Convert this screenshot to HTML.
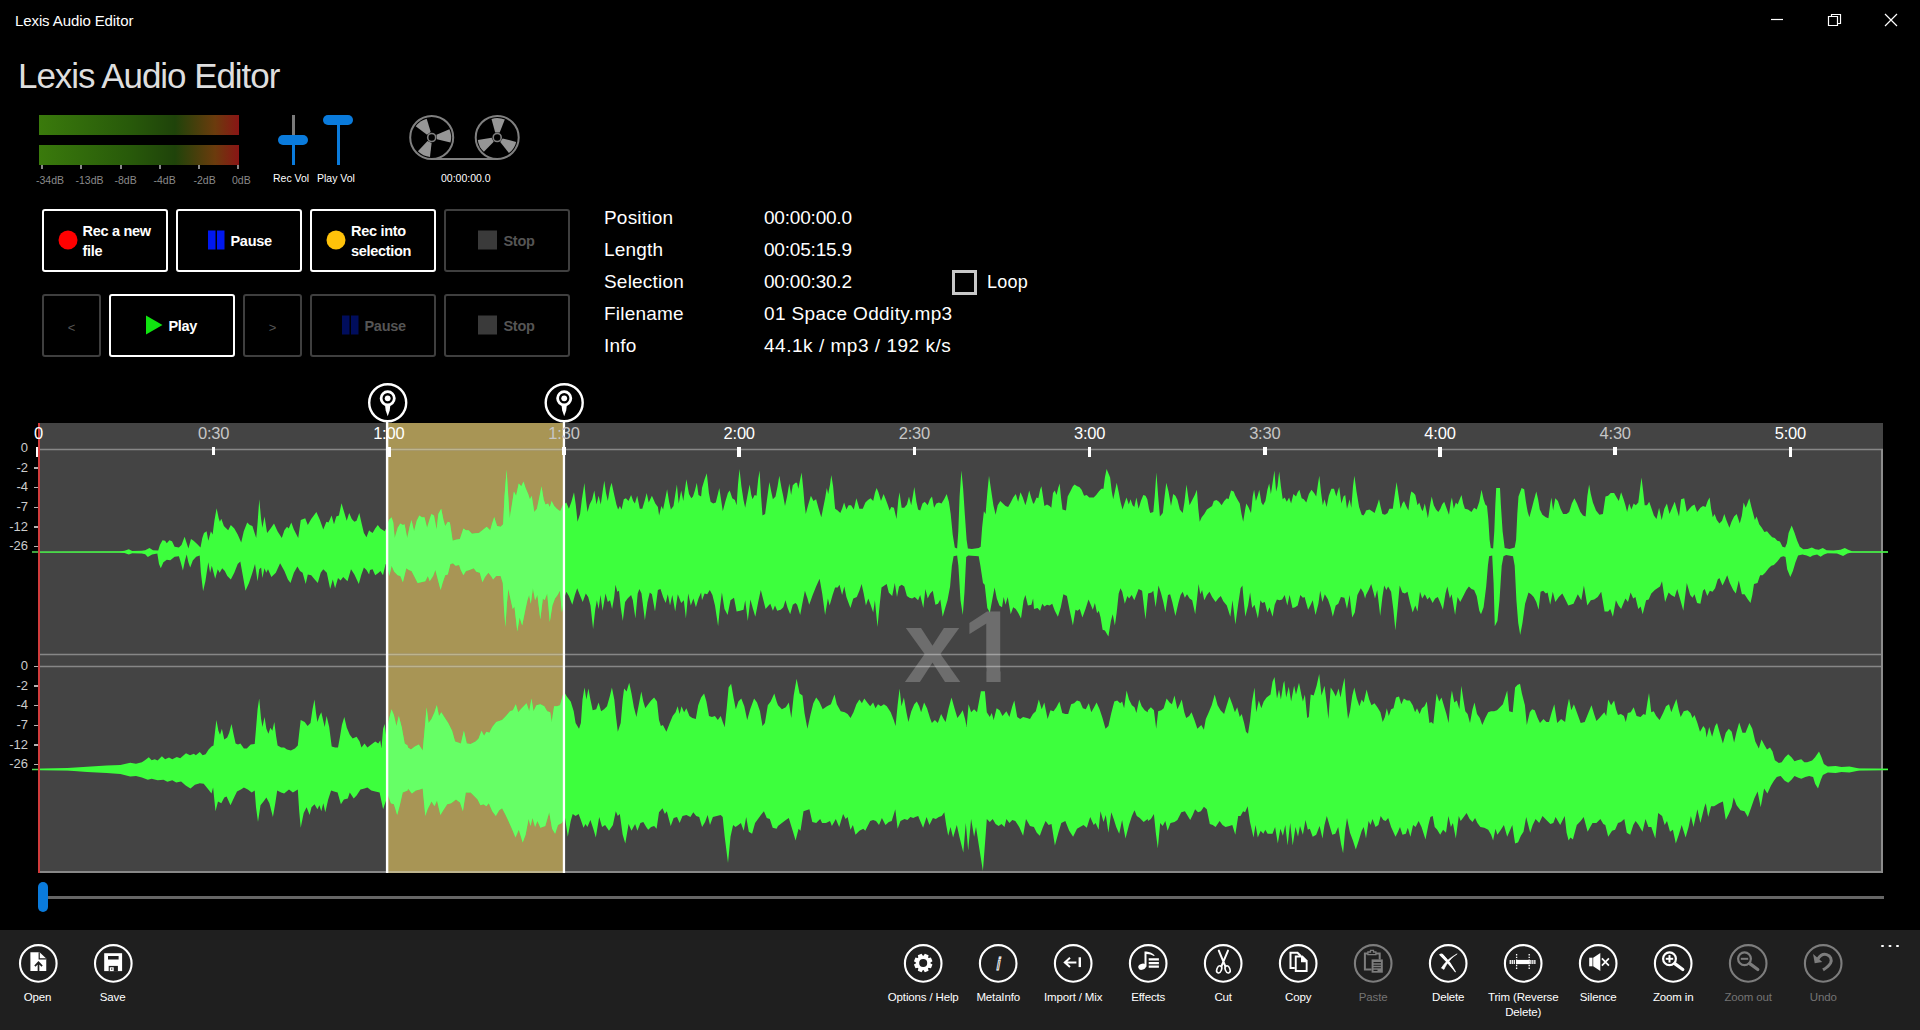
<!DOCTYPE html>
<html><head><meta charset="utf-8"><title>Lexis Audio Editor</title>
<style>
*{box-sizing:border-box;margin:0;padding:0}
html,body{width:1920px;height:1030px;overflow:hidden;background:#000;color:#fff;font-family:"Liberation Sans",sans-serif}
.abs{position:absolute}
#tbar{position:absolute;left:15px;top:11.6px;font-size:15px;line-height:18px;color:#fff;letter-spacing:-0.1px}
#title{position:absolute;left:18px;top:55px;font-size:35px;line-height:42px;color:#dedede;letter-spacing:-1.05px;font-weight:400}
.meter{position:absolute;left:39px;width:200px;height:20px;background:linear-gradient(90deg,#3a7a0c 0%,#285a0a 45%,#1f430a 68%,#6b3b0d 88%,#8a1515 100%)}
.mt{position:absolute;top:165px;width:2px;height:4px;background:#888}
.ml{position:absolute;top:174px;font-size:10.5px;line-height:12px;color:#8a8a8a;white-space:nowrap}
.vl{position:absolute;top:172px;font-size:10.5px;line-height:12px;color:#fff;white-space:nowrap}
.btn{position:absolute;height:63px;padding-top:1px;border:2px solid #fff;border-radius:3px;background:#000;color:#fff;font-size:14.5px;font-weight:700;line-height:20px;display:flex;align-items:center;letter-spacing:-0.3px}
.btn.dis{border-color:#3f3f3f;color:#555}
.il{position:absolute;left:604px;font-size:19px;line-height:24px;color:#fff;white-space:nowrap;letter-spacing:0.2px;margin-top:0.7px}
.iv{position:absolute;left:764px;font-size:19px;line-height:24px;color:#fff;white-space:nowrap;letter-spacing:-0.2px;margin-top:0.7px}
.tl{position:absolute;top:423.3px;font-size:16.5px;line-height:20px;color:#e6e6e6;white-space:nowrap;transform:translateX(-50%);letter-spacing:-0.2px}
.tk{position:absolute;top:448px;width:3px;height:8px;background:#fff}
.ax{position:absolute;left:0;width:28px;text-align:right;font-size:13px;line-height:14px;color:#ccc;margin-top:0.6px}
.axt{position:absolute;left:34px;width:3.5px;height:1.5px;background:#b4b4b4}
#bar{position:absolute;left:0;top:930px;width:1920px;height:100px;background:#1f1f1f}
.tb{position:absolute;top:0;width:100px;height:100px;text-align:center;color:#fff;font-size:11.5px;line-height:15px}
.tb svg{position:absolute;left:31px;top:13px;width:40px;height:40px;overflow:visible}
.tb span{position:absolute;left:1.2px;right:-1.2px;top:60px;display:block;letter-spacing:-0.15px}
.tb.dis{color:#747474}
</style></head><body>
<div id="tbar">Lexis Audio Editor</div>
<svg class="abs" style="left:1760px;top:0" width="160" height="40" viewBox="1760 0 160 40" fill="none" stroke="#fff" stroke-width="1.2">
<path d="M1771 19.5h12"/><path d="M1828.5 16.5h9v9h-9z"/><path d="M1831.500 16.500V14.500H1840.500V23.500H1838"/><path d="M1885 14l12 12M1897 14l-12 12"/></svg>
<div id="title">Lexis Audio Editor</div>
<div class="meter" style="top:115px"></div><div class="meter" style="top:145px"></div>
<div class="mt" style="left:41px"></div><div class="mt" style="left:80px"></div><div class="mt" style="left:120px"></div><div class="mt" style="left:159px"></div><div class="mt" style="left:198px"></div><div class="mt" style="left:237px"></div><div class="ml" style="left:36px">-34dB</div><div class="ml" style="left:75.5px">-13dB</div><div class="ml" style="left:114.5px">-8dB</div><div class="ml" style="left:153.5px">-4dB</div><div class="ml" style="left:193.5px">-2dB</div><div class="ml" style="left:232px">0dB</div>
<div class="vl" style="left:273px">Rec Vol</div><div class="vl" style="left:317px">Play Vol</div>
<div class="vl" style="left:441px">00:00:00.0</div>
<svg class="abs" style="left:270px;top:105px" width="270" height="70" viewBox="270 105 270 70">
<rect x="292" y="115" width="3" height="22" fill="#7a7a7a"/><rect x="292" y="137" width="3" height="28" fill="#0a7bdc"/>
<rect x="278" y="135" width="30" height="10" rx="5" fill="#0a7bdc"/>
<rect x="337" y="118" width="3" height="47" fill="#0a7bdc"/><rect x="323" y="115" width="30" height="10" rx="5" fill="#0a7bdc"/>
<circle cx="431.7" cy="137.5" r="21.5" fill="none" stroke="#808080" stroke-width="2"/><path d="M436.5 134.8L449.4 129.3A19.5 19.5 0 0 1 450.5 142.5L436.9 139.3Z" fill="#969696"/><path d="M431.6 143.0L430.0 156.9A19.5 19.5 0 0 1 417.9 151.3L427.5 141.1Z" fill="#969696"/><path d="M427.0 134.7L415.7 126.3A19.5 19.5 0 0 1 426.7 118.7L430.7 132.1Z" fill="#969696"/><circle cx="431.7" cy="137.5" r="4" fill="#000" stroke="#808080" stroke-width="1.6"/><circle cx="497.2" cy="137.5" r="21.5" fill="none" stroke="#808080" stroke-width="2"/><path d="M495.2 132.4L491.5 118.9A19.5 19.5 0 0 1 504.8 119.6L499.7 132.6Z" fill="#969696"/><path d="M502.6 138.4L516.2 141.9A19.5 19.5 0 0 1 508.9 153.1L500.2 142.1Z" fill="#969696"/><path d="M493.7 141.8L483.9 151.8A19.5 19.5 0 0 1 477.8 139.9L491.7 137.8Z" fill="#969696"/><circle cx="497.2" cy="137.5" r="4" fill="#000" stroke="#808080" stroke-width="1.6"/><path d="M431.7 159H497.2" stroke="#808080" stroke-width="2" fill="none"/>
</svg>
<div class="btn" style="left:42px;top:209px;width:126px"><svg style="position:absolute;left:13.5px;top:19px" width="20" height="20" viewBox="0 0 20 20"><circle cx="10" cy="10" r="9.5" fill="#f00"/></svg><span style="position:absolute;left:38.5px;white-space:nowrap">Rec a new<br>file</span></div><div class="btn" style="left:176px;top:209px;width:126px"><svg style="position:absolute;left:30px;top:19px" width="20" height="20" viewBox="0 0 20 20"><rect x="0" y="0.5" width="7.5" height="19" fill="#0018f0"/><rect x="9" y="0.5" width="7.500" height="19" fill="#0018f0"/></svg><span style="position:absolute;left:52.5px;white-space:nowrap">Pause</span></div><div class="btn" style="left:310px;top:209px;width:126px"><svg style="position:absolute;left:13.5px;top:19px" width="20" height="20" viewBox="0 0 20 20"><circle cx="10" cy="10" r="9.5" fill="#ffc20a"/></svg><span style="position:absolute;left:39px;white-space:nowrap">Rec into<br>selection</span></div><div class="btn dis" style="left:444px;top:209px;width:126px"><svg style="position:absolute;left:32px;top:19px" width="20" height="20" viewBox="0 0 20 20"><rect x="0" y="0.5" width="19" height="19" fill="#3a3a3a"/></svg><span style="position:absolute;left:57.5px;white-space:nowrap">Stop</span></div><div class="btn dis" style="left:42px;top:294px;width:59px"><span style="position:absolute;left:0;right:0;text-align:center;font-weight:400;font-size:13px;margin-top:3px">&lt;</span></div><div class="btn" style="left:109px;top:294px;width:126px"><svg style="position:absolute;left:34.5px;top:19px" width="20" height="20" viewBox="0 0 20 20"><path d="M0 0.500L16.500 10L0 19.500Z" fill="#10e510"/></svg><span style="position:absolute;left:57.5px;white-space:nowrap">Play</span></div><div class="btn dis" style="left:243px;top:294px;width:59px"><span style="position:absolute;left:0;right:0;text-align:center;font-weight:400;font-size:13px;margin-top:3px">&gt;</span></div><div class="btn dis" style="left:310px;top:294px;width:126px"><svg style="position:absolute;left:30px;top:19px" width="20" height="20" viewBox="0 0 20 20"><rect x="0" y="0.5" width="7.5" height="19" fill="#000d5c"/><rect x="9" y="0.5" width="7.500" height="19" fill="#000d5c"/></svg><span style="position:absolute;left:52.5px;white-space:nowrap">Pause</span></div><div class="btn dis" style="left:444px;top:294px;width:126px"><svg style="position:absolute;left:32px;top:19px" width="20" height="20" viewBox="0 0 20 20"><rect x="0" y="0.5" width="19" height="19" fill="#3a3a3a"/></svg><span style="position:absolute;left:57.5px;white-space:nowrap">Stop</span></div>
<div class="il" style="top:205px">Position</div><div class="iv" style="top:205px">00:00:00.0</div>
<div class="il" style="top:237px">Length</div><div class="iv" style="top:237px">00:05:15.9</div>
<div class="il" style="top:269px">Selection</div><div class="iv" style="top:269px">00:00:30.2</div>
<div class="il" style="top:301px">Filename</div><div class="iv" style="top:301px;letter-spacing:0.38px">01 Space Oddity.mp3</div>
<div class="il" style="top:333px">Info</div><div class="iv" style="top:333px;letter-spacing:0.52px">44.1k / mp3 / 192 k/s</div>
<div class="abs" style="left:952px;top:270px;width:25px;height:25px;border:3px solid #c8c8c8"></div>
<div class="il" style="left:987px;top:269px;font-size:18px">Loop</div>
<svg class="abs" style="left:0;top:380px" width="1920" height="500" viewBox="0 380 1920 500"><defs><clipPath id="sel"><rect x="388" y="423" width="175" height="450"/></clipPath><clipPath id="pan"><rect x="30" y="423" width="1860" height="450"/></clipPath></defs><rect x="38" y="423" width="1845" height="450" fill="#444"/><rect x="388" y="423" width="175" height="450" fill="#a89555"/><path d="M38 449.500H1883M38 654.500H1883M38 666.600H1883" stroke="#878787" stroke-width="1.5"/><path d="M38 872H1883" stroke="#878787" stroke-width="2"/><path d="M1882 449V873" stroke="#8c8c8c" stroke-width="2"/><path d="M388 449.500H563M388 654.500H563M388 666.600H563" stroke="#bdb48e" stroke-width="1.5"/><path d="M388 872H563" stroke="#bdb48e" stroke-width="2"/><path d="M32 552H1888M32 769.500H1888" stroke="#55d655" stroke-width="1.3"/><g clip-path="url(#pan)"><polygon points="38,551.9 119.3,551.6 124.5,550.7 128.8,549.3 132.2,551.1 141.8,550.7 145.2,550.2 149.5,548.1 153,550.2 158.2,550.5 159.9,545 162.5,540.2 165.1,540.7 166.8,543.3 169.4,540.2 172,541.2 174.6,546.7 178.9,547.6 181.5,545 184.6,536.7 186.7,543.3 188.4,548.5 191,538.9 193.6,540.7 197.1,544.1 200.5,547.6 202.3,538.1 204,532.9 206.6,531.2 208.3,540.7 210.9,531.2 212.6,534.6 214.4,520.8 216.6,508.3 218.7,518.2 219.9,521.7 221.3,518.7 223.9,526 225.6,527.7 228.2,530.3 230.8,525.1 234.3,528.6 237.7,534.6 241.2,542.4 243.8,531.2 247.2,522.5 249.8,525.1 252.4,526 256.2,538.1 257.6,522.5 259.3,499.2 261.1,519.1 262.4,527.7 264.5,516.5 267.1,532.9 270.6,528.6 274,523.4 277.5,531.2 281.8,538.1 284.4,530.3 287,526.8 288.7,528.6 291.3,522.5 293.9,529.4 298.2,538.1 300.8,519.9 305.2,518.2 307.8,525.1 311.2,519.1 316.4,512.1 319.9,519.9 323.3,529.4 326.4,521.7 328.5,522.5 331.6,515.6 334,524.2 336.3,516.5 338.9,515.6 341.5,503.2 344.1,512.1 346.7,520.8 349.2,513 351.8,519.1 354.4,521.7 356.5,520.8 359.3,513 361.4,522.5 363.9,532.9 366.5,537.2 369.1,530.3 370,531.2 372.6,532.9 375.2,528.6 377.8,525.1 380.4,528.6 384.7,531.2 386.4,527.7 389,519.9 391.6,517.3 393.3,522.5 394.7,538.1 397.7,527.7 400.3,523.4 402.9,525.1 404.6,524.2 407.2,538.1 409.8,526 411.5,519.9 414.1,531.2 416.7,520.8 419.3,515.6 421.9,517.3 424.5,517.3 427.1,527.7 429.7,519.1 431.4,513.9 434,515.6 436.6,529.4 438.3,513.9 441.2,508.7 443.5,519.9 445.2,526 447.8,521.7 449.9,522.5 452.7,540.7 455.6,539.8 459.9,538.9 463.4,528.6 466,530.3 468.6,530.3 472,533.8 475.5,533.2 478.9,532.9 482.4,530.3 486.7,526.8 490.2,530.3 491.9,524.2 494.2,517 497.1,526 500.6,526.8 503.1,524.2 504.5,496.6 506.6,469.8 508.3,496.6 509.7,518.2 511.8,505.2 513.9,491.4 516.1,495.7 518.7,483.6 521.3,486.2 523.5,481.4 525.6,487.9 528.2,494 529.9,499.2 531.7,495.7 534.3,512.1 536.9,508.7 539.5,496.6 541.5,486.2 543.8,500 545.5,504.4 548.1,503.5 549.8,507 551.6,500.9 554.2,506.1 556.8,508.7 560.2,511.3 562.8,505.2 566.3,502.6 568.9,508.7 571.4,501.8 574,492.3 575.8,505.2 577.5,521.7 580.1,513.9 581.8,500 584.4,483.1 586.1,500.9 587.5,512.1 589.6,504.4 592.2,499.2 594.3,490.5 596.5,504.4 598.6,495.7 600.8,504.4 602.6,491.4 604.3,480.7 606,493.1 607.8,500.9 610,487.9 611.6,482.8 613.8,493.1 616.4,504.4 618.1,509.6 619.9,506.1 621.6,509.6 623.8,499.2 625.9,498.3 628.5,500.9 631.1,494.9 633.2,500.9 634.9,503.5 637.2,495.7 639.8,508.7 642.3,508.7 644.9,500 646.7,493.1 648.7,502.6 651.9,495.7 655.3,503.5 657.9,507 659.1,515.6 661.4,506.1 663.1,509.6 664.8,500.9 667.1,489.3 669.1,501.8 670.9,509.6 673.5,506.1 675.2,494.9 676.9,484.5 678.7,503.5 681.2,490.5 683.3,500.9 686.4,479.3 689,494 691.3,498.3 693,496.6 695.1,489.7 696.8,482.8 698.5,494.9 701.1,496.6 702,487.9 704.6,479.3 706.8,473.2 708.9,493.1 710.6,501.8 713.2,503.5 715.8,502.6 717.9,494 719.3,487.9 721,499.2 722.8,511.3 725.3,501.8 727.9,493.1 729.7,490.5 732.3,498.3 734.9,500 736.6,505.2 738,484.5 739.5,468.9 741.4,486.2 743.5,500 745.2,507.8 747.3,496.6 749.6,484.5 751.3,494.9 752.5,499.2 754.7,494.9 756.5,495.7 758.2,479.3 759.6,470.6 761.1,496.6 762.5,515.6 765.1,513.9 767.4,496.6 769.4,481.9 771.2,491.4 772.9,499.2 775.5,496.6 777.6,486.2 779.3,475.8 781.5,487.9 783.3,496.6 785,506.1 787.1,496.6 789.3,483.6 791.1,494.9 792.8,485.3 795.4,482.8 797.1,482.8 798.3,488.8 800,480.2 801.6,472.4 803.2,487.9 804.5,503.5 805.8,513.9 808.3,504.4 810.9,495.7 813.5,500.9 816.1,499.2 818.7,508.7 821.3,517.3 823,508.7 825.1,498.3 826.8,487.9 828.2,494 830,484.5 831.3,475 833.1,486.2 835.1,508.7 837.7,510.4 840.3,513 842.1,508.7 844.1,502.6 846.4,509.6 848.6,505.2 851.1,505.2 853.8,509.6 856.4,498.3 859.4,508.7 862.8,508.7 865.4,502.6 868,500 870.6,498.3 873.2,500.9 874.9,493.1 876.6,487.9 878.4,492.3 881,500.9 883.6,494 885.3,498.3 887.9,505.2 889.6,510.4 891.3,507 893.9,507.8 896.5,519.1 898.3,500 899.5,492.3 901.7,507.8 904.3,507.8 906.9,504.4 909,496.6 911.2,505.2 913,494.9 914.3,487.1 916.4,501.8 918.1,509.6 920.2,510.4 922.5,503.5 924.7,501.8 927.7,505.2 929.9,499.2 932,496.6 934.1,507.8 936.3,503.5 938.9,502.6 941.5,503.5 944.1,499.2 946.7,494 948.9,501.8 950.7,513.9 952.7,534.6 954.8,547.6 957.1,548.5 958.3,531.2 959.6,496.6 961.4,470.6 963.1,487.9 964.8,513.9 966.6,539.8 967.9,548.5 971.8,549 978.7,548.1 980.7,546.7 982.1,527.7 983.9,511.3 985.6,513.9 987.3,493.1 989,475.8 990.8,487.9 993.4,505.2 995.6,514.7 997.7,505.2 1000.3,500.9 1002.9,503.5 1005.5,506.1 1008.1,507 1010.7,502.6 1013.2,497.4 1015.8,494 1018.1,501.8 1020.5,492.3 1022.8,497.4 1025.4,505.2 1027.1,499.2 1029.2,490.5 1031.4,498.3 1033.1,503.5 1034,503.5 1036.6,497.4 1038.3,498.3 1040.1,489.7 1041.4,486.2 1043,496.6 1044.4,506.1 1047,504.4 1049.6,506.1 1051.3,507.8 1053,493.1 1054.8,490.5 1056.5,494.9 1058.2,487.9 1059.6,483.6 1061.3,500 1062.5,509.6 1066,510.4 1067.7,496.6 1070.3,491.4 1072.9,486.2 1074.6,484.5 1077.2,486.2 1079.3,487.1 1081.6,489.7 1084.1,495.7 1086.7,494.9 1089.3,497.4 1093.7,497.4 1096.2,494.9 1098.8,491.4 1101.4,488.8 1103.5,488.8 1104.9,477.6 1106.6,468.9 1108.7,474.1 1110.1,477.6 1111.8,491.4 1113.2,499.2 1114.9,491.4 1116.7,482.8 1118.7,492.3 1120.5,501.8 1122.5,509.6 1124.8,502.6 1126.5,497.4 1128.8,504.4 1130.5,499.2 1132.6,505.2 1134.3,507 1136.4,497.4 1138.6,508.7 1140.9,500.9 1143.3,494.9 1145.5,495.7 1147.3,499.2 1149,508.7 1150.2,513 1153.3,512.1 1154.7,496.6 1156.4,472.4 1158.2,496.6 1159.9,516.5 1162.8,513 1164.6,496.6 1166.3,482.8 1168.5,491.4 1171,506.1 1173.2,494 1175.4,495.7 1177.5,500 1179.8,509.6 1182.7,513 1184.4,502.6 1186.5,484.5 1188.2,496.6 1189.6,505.2 1192.2,500 1194.8,494.9 1196.9,489.7 1198.3,508.7 1199.7,521.7 1201.7,517.3 1204.3,513.9 1206.9,509.6 1209.5,507.8 1212.1,506.1 1213.8,500.9 1216.4,500 1219,501.8 1221.6,505.2 1224.2,500.9 1226.8,498.3 1228.5,499.2 1231.1,490.5 1233.7,491.4 1235.4,495.7 1237.7,500 1239.8,503.5 1241.5,513.9 1243.2,521.7 1245,510.4 1246.3,503.5 1248.4,507 1251,513 1252.7,496.6 1254.1,489.7 1255.9,500.9 1257.9,494.9 1259.3,489.7 1261.4,502.6 1263.1,505.2 1265.4,500.9 1267.4,489.7 1269.2,483.6 1270.9,494 1272.6,482.8 1274.4,470.6 1276.1,491.4 1277.5,486.2 1279.2,471.5 1280.9,486.2 1282.7,499.2 1284.7,497.4 1286.8,501.8 1289.1,497.4 1291.1,503.5 1293.4,494 1296,496.6 1297.7,492.3 1299.4,489.7 1301.7,498.3 1303.8,499.2 1306.3,502.6 1308.9,494 1311.5,489.7 1314.1,493.1 1316.2,496.6 1317.9,484.5 1319.3,475.8 1321,492.3 1322.8,505.2 1324.5,499.2 1326.6,507 1328.8,495.7 1331.4,488.8 1334,488.8 1336.3,496.6 1338,490.5 1339.2,487.1 1341.4,503.5 1343.5,496.6 1345.2,494.9 1347,508.7 1349.6,499.2 1351.3,507.8 1353,486.2 1354.4,475.8 1356.5,491.4 1359.1,507 1361.7,514.7 1363.4,515.6 1365.1,513 1366,510.4 1369.5,509.6 1372.1,511.3 1374.6,513 1377.2,505.2 1379,499.2 1380.7,507 1382.4,513.9 1385,514.7 1387.6,513 1389.3,508.7 1392.8,508.7 1394.5,496.6 1396.6,481.9 1398.5,494.9 1400.6,508.7 1402.3,503.5 1404,500.9 1406.1,506.1 1408.4,510.4 1410.1,496.6 1411.3,491.4 1413.6,493.1 1415.3,494.9 1417.5,505.2 1419.3,502.6 1421.3,508.7 1422.7,511.3 1424.8,503.5 1426.5,511.3 1427.9,518.2 1430,505.2 1431.7,496.6 1433.8,505.2 1436,509.6 1438.3,512.1 1440.4,508.7 1442.1,504.4 1444.2,501.8 1446.4,507.8 1449,514.7 1450.7,502.6 1451.9,497.4 1453.8,508.7 1455.9,502.6 1457.6,504.4 1459.7,499.2 1461.5,494.9 1463.2,503.5 1464.9,508.7 1468,509.6 1471.5,512.1 1474.1,507.8 1476.7,509.6 1479.3,501.8 1481.5,489.7 1483.6,499.2 1485.3,504.4 1487,506.1 1488.3,519.1 1489.6,539.8 1490.8,548.1 1493.1,548.5 1494.3,531.2 1495.3,505.2 1496.2,487.9 1500,487.9 1500.9,505.2 1502.6,531.2 1504.7,548.1 1509.5,549 1514.7,547.6 1516.1,539.8 1517.3,513.9 1518.5,496.6 1521.6,487.9 1524.2,489.3 1525.9,501.8 1527.7,512.1 1529.4,517.3 1531.7,508.7 1533.7,500.9 1536.3,491.4 1538.1,499.2 1539.8,509.6 1542.4,514.7 1545.8,517.3 1548.4,518.2 1550.2,504.4 1551.4,497.4 1553.1,510.4 1555.3,498.3 1557.9,500.9 1560.5,508.7 1563.1,513.9 1566.6,513.9 1569.2,512.1 1571.8,503.5 1574.4,498.3 1577,503.5 1580.4,512.1 1583,515.6 1585.6,516.5 1587.3,496.6 1589.1,484.5 1590.8,494 1592.9,502.6 1596,510.4 1599.4,514.7 1602.9,513.9 1605.5,496.6 1608.1,495.7 1610.7,493.1 1614.1,493.1 1616.7,497.4 1618.8,500.9 1621.1,492.3 1623.6,499.2 1625.4,505.2 1627.1,512.1 1629.2,503.5 1631.4,509.6 1633.7,503.5 1635.8,505.2 1638.3,502.6 1640.1,487.9 1641.5,477.6 1643.2,491.4 1644.7,505.2 1647,505.2 1649.2,501.8 1651.3,507.8 1653.9,515.6 1656.5,519.1 1659.1,507.8 1661.7,519.9 1664.3,508.7 1666.9,503.5 1669.5,513.9 1672.1,507.8 1674.7,501.8 1676.4,507.8 1679,516.5 1681.1,499.2 1684.2,498.3 1686.8,512.1 1689.4,508.7 1691.9,506.1 1694.5,504.4 1697.1,512.1 1700.4,507.8 1703,506.1 1705.6,507 1707.7,500.9 1709.6,497.4 1711.1,508.7 1712.8,517.3 1714.6,513.9 1716.8,519.9 1719.4,523.4 1722,520.8 1724.3,513.9 1726.3,519.9 1729.4,527.7 1731.5,521.7 1734.1,516.5 1736.7,513.9 1739.8,523.4 1741.9,515.6 1743.6,502.6 1745.7,507.8 1747.4,503.5 1749.3,498.3 1751.4,507 1753.7,515.6 1754.9,519.9 1756.6,516.5 1759.2,524.2 1761.8,527.7 1764.4,532 1767,531.2 1769.6,534.6 1772.2,537.2 1774.8,538.1 1777.3,540.7 1779.9,541.5 1782.5,546.7 1785.1,547.6 1786.9,543.3 1788.6,532.9 1791.7,525.6 1794.6,532.9 1797.2,540.7 1799.8,546.7 1803.3,549.3 1807.6,549 1811.9,547.6 1815.4,549.3 1818.8,549.7 1822.8,547.9 1826.6,550.2 1833.5,550.5 1840.5,549.8 1844.8,547.9 1848.2,549.8 1852.6,551.4 1888,551.4 1888,552.6 1851.7,552.6 1847.4,553.6 1843.1,555.9 1837,553.6 1827.5,553.3 1824,554.5 1820.6,556.8 1817.1,554.5 1812.8,555.4 1810.2,557.1 1806.7,555.4 1802.4,554.5 1798.1,555.4 1795.5,562.3 1792.9,570.9 1790.3,577 1787.2,569.2 1785.5,557.1 1783.4,556.2 1780.8,557.1 1777.3,561.4 1773.9,564.9 1771.3,565.8 1768.7,568.3 1765.2,572.7 1762.6,575.3 1760.1,575.3 1757.5,583 1754,583.9 1752.3,595.1 1750.5,602.9 1747.9,599.5 1744.5,594.3 1741.9,594.3 1738.8,580.4 1735.8,593.4 1733.2,590 1729.8,583 1727.2,575.3 1724.6,581.3 1722.5,585.6 1719.4,577.9 1717.7,579.6 1715.1,588.2 1712.5,591.7 1709.9,590.8 1707.3,596 1704.7,589.1 1703,590.8 1700.4,603.8 1697.1,602.9 1694.5,594.3 1692.5,597.7 1690.2,595.1 1686.8,583 1683.3,610.7 1680.4,600.3 1677.2,589.1 1674.7,596.9 1671.2,595.1 1668.6,592.6 1665.1,602.1 1662,581.3 1660,586.5 1657.4,588.2 1654.8,590 1651.3,593.4 1648.7,599.5 1646.1,600.3 1642.7,614.2 1640.6,606.4 1638.3,609 1635.4,596.9 1633.2,598.6 1630.6,592.6 1628,602.1 1625.4,598.6 1621.1,609 1618.5,605.5 1615.9,600.3 1612.9,616.8 1610.2,609 1608.1,611.6 1604.6,611.6 1601.2,591.7 1597.7,596.9 1594.2,599.5 1590.8,600.3 1587.3,605.5 1583.9,585.6 1581.3,600.3 1577.8,594.3 1573.5,603.8 1568.3,605.5 1564.9,598.6 1562.3,593.4 1558.8,596.9 1555.3,602.1 1552.8,591.7 1550.2,604.7 1547.6,592.6 1545.8,593.4 1543.2,590.8 1540.6,591.7 1538.6,609.8 1536.3,602.1 1533.7,596.9 1531.1,594.3 1528.5,592.6 1525.1,603.8 1522.5,622.8 1520.2,634.9 1518.2,622.8 1516.4,600.3 1514.7,565.8 1513,556.2 1506.1,555 1503.5,556.2 1501.7,565.8 1499.5,600.3 1497.4,621.1 1494.8,626.3 1493.6,583 1492.2,555.4 1489.1,556.2 1487.9,565.8 1486.2,586.5 1483.6,607.2 1481,614.2 1479.3,610.7 1476.7,596 1474.1,590 1471.5,589.1 1468.9,586.5 1466.3,590 1462.8,596.9 1460.2,602.1 1457.6,596.9 1455.1,615 1451.6,594.3 1449.9,598.6 1447.3,586.5 1445.5,593.4 1442.9,609.8 1440.4,602.9 1437.8,596.9 1435.2,598.6 1432.6,602.9 1429.6,596.9 1427.4,599.5 1424.8,594.3 1422.2,598.6 1420,591.7 1417.5,611.6 1415.3,605.5 1412.7,612.4 1410.1,602.9 1407.5,591.7 1404.9,593.4 1402.3,592.6 1399.7,585.6 1397.5,609 1395.4,630.6 1393.3,609 1391.1,591.7 1388.1,586.5 1386.4,590 1384.2,585.6 1382.4,596.9 1380.2,615.9 1377.2,590 1375,598.6 1373.3,591.7 1371.2,583.9 1368.6,590 1366,595.1 1365.1,598.6 1363.4,592.6 1360.8,588.2 1357.4,595.1 1354.8,612.4 1352.2,617.6 1349.6,595.1 1347,609 1344.4,597.7 1340.9,596.9 1338.3,603.8 1335.7,605.5 1332.8,616.8 1330.6,607.2 1328,599.5 1324.8,594.3 1322.4,602.1 1320.2,590.8 1318.4,603.8 1315.5,615 1312.7,600.3 1310.7,604.7 1308.1,609.8 1304.6,596.9 1302.9,597.7 1300.3,595.1 1297.7,605.5 1295.1,607.2 1292.5,608.1 1289.6,595.1 1287.3,605.5 1284.7,595.1 1282.1,599.5 1279.5,600.3 1276.9,599.5 1274.7,604.7 1272.6,616.8 1269.5,607.2 1267.4,612.4 1264.8,602.1 1262.2,602.9 1260.5,600.3 1257.9,618.5 1254.5,604.7 1252.2,608.1 1250.1,592.6 1248.1,605.5 1245.3,616.8 1243.7,600.3 1242.4,585.6 1240.6,588.2 1238,605.5 1235.4,624.5 1232.5,600.3 1230.3,616.8 1226.8,605.5 1223.3,601.2 1220.8,596 1218.2,598.6 1215.6,602.1 1212.1,596.9 1209.5,591.7 1206.9,595.1 1204.3,600.3 1202.1,590 1200.3,594.3 1198.6,583.9 1196.9,600.3 1195.2,614.2 1192.2,600.3 1189.6,598.6 1187,594.3 1184.8,597.7 1182.7,591.7 1180.6,595.1 1178.4,602.9 1175.4,615.9 1172.3,602.1 1170.1,594.3 1168,595.1 1165.4,612.4 1163.3,602.1 1161.1,593.4 1158.5,585.6 1155.6,607.2 1153.3,590.8 1151.6,592.6 1148.1,593.4 1145.5,619.4 1143.8,605.5 1142.1,590.8 1138.6,589.1 1136.9,593.4 1134.3,600.3 1131.7,595.1 1129.1,598.6 1127.4,596 1124.8,603.8 1122.2,591.7 1120.5,588.2 1118.7,593.4 1116.7,612.4 1114.9,625.4 1112.7,614.2 1110.9,621.1 1108.4,636.6 1104.9,630.6 1102.6,629.7 1100.6,617.6 1098.8,610.7 1097.1,613.3 1094.9,602.9 1092.8,609.8 1091.1,605.5 1088.5,599.5 1085.5,609 1082.4,617.6 1079.8,609 1077.6,610.7 1075.5,609.8 1072.9,625.4 1069.4,609 1066.9,596 1063.4,594.3 1060.8,607.2 1057.9,616.8 1054.8,610.7 1052.2,603.8 1049.6,605.5 1047,604.7 1044.4,606.4 1042.3,603.8 1040.1,610.7 1037.5,608.1 1034,609 1033.1,598.6 1031.4,604.7 1027.9,605.5 1025.4,595.1 1023.6,600.3 1021,618.5 1018.4,613.3 1015.8,609 1013.2,607.2 1010.7,614.2 1007.7,596.9 1005.5,604.7 1003.7,596.9 1002,607.2 999.4,605.5 996.8,598.6 994.6,587.4 992.5,598.6 989.9,612.4 987.3,608.1 984.7,584.8 983,583 980.4,565.8 978.7,556.2 968.3,555.4 966.2,557.1 964.5,591.7 962.8,615 960.5,600.3 958.4,565.8 957.1,555.4 953.6,556.2 951.9,565.8 950.1,586.5 947.5,600.3 944.9,609 942.7,616.8 940.3,599.5 938,603.8 935.4,604.7 932.8,590.8 930.2,593.4 927.7,598.6 925.4,589.1 923.3,608.1 920.2,595.1 918.1,600.3 914.7,596.9 912.1,598.6 909.5,597.7 906.9,596 904.3,586.5 901.7,584.8 899.1,586.5 897,596.9 894.8,583 892.2,596 888.8,592.6 886.7,583.9 884.4,585.6 881.5,587.4 879.8,603.8 877.5,627.1 874.9,600.3 873.2,612.4 870.6,604.7 868.3,598.6 865.9,605.5 863.7,593.4 861.6,583.9 859.4,590.8 856.8,596.9 853.3,598.6 850.4,608.1 846.4,596.9 844.3,586.5 842.1,595.1 839.5,584.8 837.7,587.4 835.1,587.4 832.6,595.1 829.6,605.5 827.9,598.6 825.1,615 822.2,593.4 819.6,578.7 816.1,586.5 812.7,595.1 809.2,604.7 807.5,598.6 804.9,590.8 802.3,603.8 800.2,615 797.1,604.7 795.4,602.9 792.8,604.7 790.2,614.2 787.6,608.1 785.5,600.3 783.3,607.2 780.7,609.8 777.2,610.7 775,605.5 772.9,610.7 770.3,603.8 768.6,605.5 765.6,609 763.4,600.3 760.8,590 758.2,602.1 755.3,616.8 753,609 750.4,599.5 747.8,621.1 745.2,600.3 743.5,609.8 740,610.7 736.6,611.6 734,597.7 730.5,600.3 727.6,615 724.5,609 721.9,592.6 720.2,605.5 718.1,626.3 715,605.5 712.4,595.1 709.8,590 707.2,594.3 704.6,593.4 702,600.3 701.1,592.6 698.5,598.6 695.9,607.2 693.4,598.6 690.8,605.5 688.2,593.4 685.9,618.5 683.8,600.3 681.2,602.9 677.8,594.3 675.2,611.6 672.3,595.1 670,605.5 667.8,594.3 665.7,602.9 663.1,596.9 660.5,589.1 657.9,590 655,611.6 651.9,594.3 649.8,592.6 647.5,602.1 644.9,620.2 641.5,593.4 639.4,589.1 637.7,593.4 635.4,618.5 632.8,600.3 631.1,595.1 627.6,598.6 625.1,602.1 622.8,621.1 620.7,607.2 619,590.8 617.3,591.7 615.5,584.8 614.2,596.9 612.1,609 610,600.3 607.8,602.1 605.5,593.4 602.6,610.7 600.5,595.1 598.6,609 596.9,600.3 595.3,609 593.1,628.9 590.5,605.5 588.2,596.9 585.8,593.4 582.7,602.1 579.2,593.4 577.2,588.2 574.9,595.1 572.3,604.7 568.9,596 566.3,591.7 563.7,600.3 561.9,612.4 559.9,590.8 557.6,595.1 555,598.6 552.4,605.5 549.8,621.9 547.2,593.4 544.6,600.3 542.9,598.6 540.3,619.4 537.4,595.1 535.1,600.3 532.9,588.2 530.8,603.8 529.1,595.1 527.4,600.3 524.8,612.4 522.2,625.4 519.6,617.6 517.3,631.5 514.4,606.4 512.7,609 510.4,598.6 508.3,589.1 506.9,603.8 505.4,627.1 504,609 502.8,583 500.6,576.1 496.2,576.1 493.1,579.6 491,576.1 488.4,572.7 485,577 482.4,582.2 479.8,572.7 476.3,571.8 473.8,568.3 469.4,570.1 466,570.9 463.4,575.3 460.8,570.1 459.1,564.9 455.6,565.8 453,563.2 450.4,564 447.8,574.4 445.2,575.3 442.6,583 440.6,590 438.3,581.3 435.4,570.1 433.1,576.1 429.7,581.3 427.9,576.1 425.3,581.3 421,582.2 417.6,583 414.1,576.1 411.5,570.9 408.9,570.1 406.3,568.3 402.9,582.2 400.3,576.1 397.7,575.3 394.2,571.8 391.6,565.8 389.4,576.1 387.3,565.8 385.6,564 383,575.3 380.4,570.9 378.6,572.7 375.2,575.3 372.6,569.2 370,570.1 369.1,574.4 366.5,570.1 363.9,567.5 361.4,574.4 358.8,583.9 354.4,574.4 351,569.2 347.5,581.3 343.2,577 340.6,580.4 338,577.9 335.1,588.2 332.8,579.6 330.2,589.1 326.8,572.7 323.3,569.2 320.7,572.7 317.8,583 314.7,579.6 311.2,575.3 307.8,574.4 305.7,583.9 302.6,572.7 300,570.9 297.4,566.6 293.9,572.7 290.5,583 287.9,579.6 284.4,570.9 280.1,563.2 275.8,572.7 271.4,577 268,569.2 266.2,572.7 264.5,568.3 262.4,577.9 261.1,567.5 259.3,569.2 257.6,581.3 255,564 252.4,572.7 249,583 245.5,590.8 242.9,576.1 240.3,561.4 237.7,564 234.3,572.7 230.8,579.6 227.3,576.1 224.8,570.9 222.2,568.3 219.6,572.7 217.8,569.2 215.2,578.7 211.8,565.8 210.1,572.7 208.3,562.3 205.4,581.3 203.1,591.3 200.9,572.7 199.7,555.4 196.2,556.8 192.8,560.6 190.2,567.5 188.4,562.3 186.7,554.5 185,560.6 182.9,570.6 180.7,562.3 178.9,556.2 174.6,556.8 170.3,560.2 166.8,559.7 163.4,562.3 160.8,568.3 159,564 157.3,553.6 152.1,554.5 147.8,557.1 145.2,554.2 141.8,553.6 132.2,553.3 128.8,554.5 124.5,553.1 119.3,552.6 38,552.6" fill="#3dff3d"/><polygon points="38,768.8 67.4,768 87,766.7 106.6,765.5 120.4,765.1 130.2,762.7 136,763.7 141.9,762.2 144.9,760.2 148.8,757.3 151.7,760.2 154.7,759.2 157.6,760.6 161.9,756.3 165.1,759.2 169,757.6 172.3,759.2 176.8,756.9 180.2,758.2 186,753.3 190,755.3 193.9,753.7 195.8,755.3 199.8,752 202.7,755.3 205.6,754.3 208.6,749.4 211.5,746.5 213.5,745.5 214.9,732.7 216.4,720 218.4,730.8 220,734.7 221.9,728.8 224.3,739.6 227.2,737.6 229.2,732.7 231.5,723.9 233.7,734.7 235.6,743.5 238,744.5 240.4,743.5 243.9,748.4 246.8,748.4 250.7,744.5 254.7,744.1 256,728.8 257.6,709.2 259.2,698.4 261.1,719 262.5,726.9 264.5,717.1 266.4,728.8 268.4,733.7 270.4,727.8 272.3,730.8 274.3,722 276.2,736.7 277.6,745.5 281.1,747.5 284.1,747.5 287,749.4 290.9,750.4 294.9,748.4 297.8,745.5 299.2,732.7 300.7,720 304.7,722 307.6,725.9 310.5,722.9 312.5,709.2 314.5,699.4 316,713.1 317.4,722 319.4,716.1 321.3,712.2 323.3,721 324.7,726.9 326.6,716.1 329.2,726.9 331.7,746.5 335.1,747.5 338,747.5 340,736.7 341.9,724.9 344.3,717.1 346.8,727.8 349.8,734.7 352.7,738.6 356.6,736.7 359.6,741.6 361.5,747.5 364.5,743.5 367.4,747.5 371.3,744.5 375.3,741.6 378.2,743.5 380.2,740.6 381.5,748.4 383.1,728.8 384.7,723.9 386,734.7 389,719 391.5,709.2 393.9,715.1 396.4,725.9 398.8,716.1 401.7,726.9 404.7,743.5 407.6,745.5 408,747.5 410.9,749.4 414.9,746.5 418.8,744.5 422.7,750.4 424.7,728.8 426.6,707.3 428.6,722.9 431.5,719 434.5,712.2 436.8,704.9 439,716.1 441.3,712.2 444.3,717.1 448.2,722.9 452.1,730.8 455.1,741.6 460.9,743.5 463.9,730.8 466.8,743.5 470.7,744.1 475.6,741.6 478.6,738.6 481.5,730.8 484.1,735.7 486.4,731.8 489.4,732.7 492.3,726.9 496.2,722 502.1,720 506,716.1 510,711.2 512.9,710.2 515.8,704.3 518.2,712.2 521.7,708.2 526.6,703.3 529.2,711.2 531.5,698.4 533.5,711.2 536.4,705.3 540.4,704.3 544.3,706.3 547.2,711.2 550.2,712.2 551.7,722 554.1,706.3 557,706.3 560,705.3 563.9,691.6 566.8,696.5 570.7,701.4 573.7,711.2 575.6,722.9 579,728.8 580.9,722.9 582.5,699.4 584.5,687.6 586.4,699.4 588.4,688.6 590.4,699.4 592.7,710.2 596.2,709.2 598.6,702.4 601.1,711.2 604.1,709.2 607,706.3 610,695.5 611.9,687.6 614.3,699.4 615.8,715.1 617.8,731.8 620.7,722.9 622.7,699.4 624.1,688.6 626.6,691.6 629.2,682.7 631.5,693.5 633.9,707.3 636.4,717.1 639.4,701.4 641.3,691.6 643.3,701.4 645.3,708.2 648.2,704.3 651.1,700.4 654.1,697.5 657,701.4 659,720 660.9,725.9 662.9,724.9 666.4,731.8 669.8,722.9 672.7,716.1 675.6,712.2 677.6,706.3 679.6,714.1 681.5,706.3 684.1,712.2 686.4,708.2 689.4,716.1 692.3,718 695.8,719 698.2,705.3 701.1,697.5 704.1,693.5 706.4,701.4 709,716.1 711.9,717.1 714.9,716.1 717.8,720 720.7,716.1 722.7,722 724.7,726.9 726.6,709.2 728.6,687.6 731.1,683.7 733.5,697.5 735.8,709.2 738.4,701.4 741.3,698.4 744.3,706.3 747.2,720 750.2,709.2 754.1,698.4 757,702.4 760,711.2 762.5,725.9 764.9,722.9 767.8,705.3 770.7,701.4 774.3,693.5 776.6,701.4 778,705.3 781.9,709.2 785.8,707.3 788.8,702.4 791.3,718 793.7,695.5 796.6,678.8 799.6,693.5 802.5,695.5 804.5,713.1 807.4,728.8 810.4,715.1 813.3,703.3 816.2,697.5 819.2,701.4 822.7,709.2 827,706.3 830.9,704.3 834.5,694.5 836.8,704.3 840.7,711.2 844.7,712.2 847.6,714.1 850.5,718 853.5,712.2 856.4,704.3 859.4,699.4 861.9,703.3 864.3,698.4 867.2,702.4 870.2,706.3 873.1,702.4 875.5,708.2 878,704.3 880.9,706.3 883.9,704.3 886.8,706.3 890.7,712.2 893.7,720 895.6,725.9 897.6,705.3 899.6,688.6 901.5,706.3 903.9,697.5 906.4,712.2 908.4,722 911.3,711.2 914.3,704.3 916.8,701.4 919.2,706.3 921.1,712.2 924.1,702.4 927,708.2 930,718 931.9,722.9 934.9,720 937.8,722.9 941.1,714.1 943.7,719 945.6,722 948.6,708.2 951.5,697.5 954.5,708.2 957.4,718 960.4,714.1 962.7,710.2 965.3,720 966.6,726.9 968.6,704.3 971.1,712.2 974.1,709.2 977,712.2 979,701.4 980.9,691.2 984.9,691.2 986.8,712.2 989.8,717.1 991.7,713.1 993.7,720 996.6,708.2 999.6,710.2 1002.5,716.1 1006.4,711.2 1009.4,717.1 1012.3,706.3 1014.3,700.4 1017.2,717.1 1020.2,719 1023.1,717.1 1027,718 1030,719 1032.9,714.1 1035.8,711.2 1038.8,699.4 1041.7,709.2 1044.3,702.4 1047.6,719 1050.5,710.2 1053.5,711.2 1056.4,707.3 1059.4,701.4 1062.3,713.1 1065.3,714.1 1068.2,714.1 1071.1,704.3 1074.1,703.3 1077,700.4 1080,701.4 1082.9,708.2 1085.8,709.2 1088.8,703.3 1091.3,712.2 1094.1,707.3 1096.6,702.4 1099.6,709.2 1102.5,718 1105.5,728.8 1108.4,725.9 1111.3,713.1 1114.3,701.4 1117.2,700.4 1120.2,703.3 1122.1,701.4 1124.1,708.2 1126.6,690.6 1129,699.4 1131.9,705.3 1134.5,707.3 1136.4,713.1 1139.2,699.4 1141.7,706.3 1144.7,710.2 1147.6,712.2 1148,710.2 1150.9,707.3 1153.9,710.2 1156.2,728.8 1158.2,711.2 1161.3,710.2 1163.7,708.2 1166.6,698.4 1169.6,702.4 1171.9,704.3 1174.5,695.5 1177.4,709.2 1179.8,704.3 1181.7,699.4 1184.3,712.2 1186.2,718 1189.2,716.1 1191.5,712.2 1194.1,719 1197.4,728.8 1201.3,724.9 1203.9,729.8 1205.8,719 1208.8,712.2 1211.7,705.3 1214.7,694.5 1217.6,705.3 1220.5,710.2 1224.1,714.1 1226.4,706.3 1229.4,696.5 1232.3,704.3 1234.9,712.2 1237.2,707.3 1239.8,717.1 1241.7,714.1 1244.1,722.9 1246,731.8 1248,733.7 1250,721 1251.9,702.4 1254.5,687.6 1256.2,712.2 1258.8,700.4 1261.3,708.2 1263.7,701.4 1266.6,697.5 1270.5,694.5 1272.5,681.8 1274.5,676.9 1277,698.4 1279,689.6 1280.9,699.4 1283.3,683.7 1284.3,680.8 1286.2,697.5 1288.8,686.7 1291.1,701.4 1294.1,685.7 1296,694.5 1299,682.7 1301.5,695.5 1302.9,701.4 1304.9,694.5 1307.2,718 1308.8,717.1 1310.7,694.5 1313.7,695.5 1316.6,685.7 1319.2,673.9 1321.5,695.5 1324.5,685.7 1326.8,704.3 1328.4,719 1330.7,687.6 1333.3,691.6 1335.8,696.5 1338.6,688.6 1340.5,697.5 1342.5,686.7 1344.5,677.8 1346,699.4 1348,719 1350,711.2 1352.3,695.5 1354.3,687.6 1356.8,698.4 1359.4,706.3 1361.7,699.4 1363.7,702.4 1366.6,689.6 1369.2,699.4 1371.5,705.3 1374.5,703.3 1377.4,707.3 1380.4,712.2 1382.7,722 1384.9,717.1 1386.8,708.2 1388.8,716.1 1391.1,709.2 1393.5,708.2 1396,697.5 1399,696.5 1401.3,704.3 1403.9,698.4 1406.8,700.4 1409.8,700.4 1412.7,705.3 1415.1,712.2 1417,708.2 1419.6,714.1 1421.9,708.2 1424.5,706.3 1426.8,701.4 1429.4,722.9 1431.3,722 1433.3,723.9 1435.3,705.3 1436.6,693.5 1439.2,701.4 1441.5,697.5 1444.1,706.3 1446.4,714.1 1448.6,722.9 1450.5,699.4 1451.9,690.6 1454.3,702.4 1456.8,700.4 1459.4,709.2 1461.3,685.7 1463.7,701.4 1465.3,711.2 1467.6,714.1 1470,722.9 1472.5,709.2 1474.5,702.4 1477,714.1 1479.8,718 1482.3,724.9 1485.3,718 1488.2,712.2 1491.1,711.2 1494.1,711.2 1497,710.2 1500,707.3 1502.9,704.3 1505.3,696.5 1507.2,690.6 1509.2,711.2 1512.7,712.2 1515.1,687.6 1517.6,684.7 1518,684.7 1520,683.7 1521.9,693.5 1524.9,705.3 1526.8,724.9 1529.8,712.2 1532.1,709.2 1534.7,710.2 1537.6,718 1540,722.9 1543.5,719 1546.4,722 1549,722 1551.7,712.2 1554.3,704.3 1557.2,722.9 1561.1,719 1565.1,722 1567,708.2 1569,698.4 1571.3,710.2 1573.9,704.3 1576.8,712.2 1580.7,722.9 1584.7,722 1588.6,712.2 1591.5,705.3 1594.1,714.1 1596.4,721 1599.4,718 1604.3,712.2 1606.2,716.1 1608.2,699.4 1611.1,705.3 1614.1,700.4 1616,709.2 1618,715.1 1620.9,714.1 1623.9,716.1 1625.8,722 1627.8,713.1 1630.7,712.2 1633.7,707.3 1636.6,716.1 1640.5,717.1 1643.5,714.1 1645.5,715.1 1647.4,702.4 1649,693.1 1651.3,712.2 1653.7,711.2 1656.2,716.1 1659.6,720 1663.1,713.1 1666,706.3 1669,704.3 1671.3,712.2 1673.9,705.3 1676.4,699 1678.8,710.2 1680.7,717.1 1683.7,711.2 1687.6,710.2 1690.5,713.1 1692.5,718 1694.5,715.1 1697.4,722.9 1700,731.8 1703.3,725.9 1705.3,728.8 1706.6,737.6 1709.2,726.9 1712.1,736.7 1715.1,725.9 1717,722.9 1720,733.7 1722.9,743.5 1725.8,732.7 1728.8,728.8 1731.7,731.8 1734.1,742.5 1736.6,731.8 1739.2,722.5 1742.5,732.7 1745.5,732.7 1749.4,722.9 1752.3,728.8 1755.3,741.6 1758.8,748.4 1761.5,739.6 1764.7,745.5 1767,749.4 1770,747.5 1772.5,751.4 1774.9,760.2 1778.8,763.1 1781.7,762.2 1785.1,757.3 1788.2,754.3 1791.5,757.3 1794.5,761.2 1797.4,760.2 1801.3,759.2 1804.3,762.2 1807.2,762.2 1812.1,760.6 1815.1,757.3 1819,751.4 1821.5,757.3 1823.9,764.1 1827.8,766.5 1835.6,766.1 1841.5,767.1 1849.4,766.5 1859.2,768.4 1888,768.8 1888,770 1859.2,770.4 1849.4,772.4 1841.5,772 1835.6,772.9 1827.8,772.4 1822.9,774.9 1820.9,779.8 1818,788.6 1815.1,783.7 1813.1,776.9 1809.2,775.9 1805.3,776.9 1801.3,778.8 1798.4,777.8 1794.5,775.9 1791.5,779.8 1788.2,782.7 1784.7,780.8 1780.7,775.9 1776.8,776.9 1773.9,780.8 1770.9,785.7 1767.4,793.5 1764.1,788.6 1760.7,807.3 1757.6,791.6 1754.3,798.4 1751.3,807.3 1747.8,817.1 1744.5,811.2 1740.5,810.2 1736.6,805.3 1733.7,797.5 1731.7,807.3 1728.8,814.1 1725.8,820 1722.9,801.4 1719,803.3 1714.1,806.3 1711.1,806.3 1708.2,817.1 1705.8,803.3 1704.3,807.3 1700.4,822.9 1697.4,809.2 1693.5,826.9 1690.9,816.1 1688.6,826.9 1685.6,837.6 1681.7,824.9 1678.8,834.7 1675.8,843.5 1672.9,829.8 1670,831.8 1667,821 1664.7,824.9 1662.1,816.1 1658.2,813.1 1655.3,838.6 1651.3,826.9 1648.4,826.9 1645.5,819 1642.5,831.8 1638.6,824.9 1635.6,821 1633.3,824.9 1630.2,834.7 1626.8,832.7 1624.3,819 1620.9,822 1618,822.9 1615.1,829.8 1612.1,830.8 1608.2,836.7 1605.3,824.9 1603.3,823.9 1600.4,819 1596.4,822.9 1592.5,822.9 1587.6,831.8 1583.7,817.1 1580.7,821 1576.8,824.9 1572.9,839.6 1570.5,837.6 1568.6,840.6 1566.6,832.7 1564.7,816.1 1560.2,824.9 1555.6,817.1 1553.3,822.9 1550.4,823.9 1546.4,820 1542.5,816.1 1539.2,822.9 1535.6,819 1532.7,824.9 1530.2,832.7 1526.2,817.1 1523.5,831.8 1520.9,835.7 1518,842.5 1517.6,842.5 1515.1,843.5 1512.3,824.9 1509.8,830.8 1507.2,836.7 1503.9,824.9 1500.9,829.8 1497.4,834.7 1495.5,828.8 1493.1,840.6 1491.1,834.7 1488.2,829.8 1484.3,827.8 1480.4,826.9 1477.4,822.9 1475.1,818 1472.5,822 1469.6,819 1466.6,813.1 1463.7,817.1 1460.7,821 1458.8,816.1 1455.8,838.6 1452.9,822.9 1450.9,826.9 1448.4,816.1 1446,832.7 1443.1,829.8 1440.2,834.7 1437.2,829.8 1434.7,826.9 1432.7,816.1 1430.4,817.1 1428.4,824.9 1425.5,839.6 1421.5,826.9 1418.6,821 1415.6,826.9 1413.1,824.9 1410.4,836.7 1407.8,827.8 1405.8,833.7 1402.5,834.7 1400,826.9 1398,831.8 1395.5,836.7 1391.1,826.9 1388.2,818 1385.6,821 1383.3,820 1380.7,816.1 1378.4,824.9 1375.5,826.9 1372.5,819 1370.5,824.9 1368.6,821 1366,838.6 1363.7,826.9 1361.7,830.8 1358.8,840.6 1355.8,849.4 1352.9,840.6 1350,832.7 1347,818 1345.1,830.8 1343.1,853.3 1341.1,844.5 1338.2,826.9 1335.3,833.7 1332.3,834.7 1329.4,824.9 1326.8,816.1 1324.5,824.9 1322.5,838.6 1319.6,825.9 1316.2,834.7 1312.7,836.7 1309.8,828.8 1307.8,829.8 1305.5,820 1302.9,834.7 1300,825.9 1298,836.7 1295.5,826.9 1292.7,845.5 1290.2,822.9 1287.6,845.5 1285.3,824.9 1282.9,835.7 1280.4,828.8 1277.8,843.5 1275.1,826.9 1272.5,833.7 1267.6,833.7 1265.3,829.8 1263.3,833.7 1260.7,830.8 1257.8,837.6 1255.5,824.9 1253.5,837.6 1250,822 1247.6,806.3 1245.1,812.2 1243.1,811.2 1240.5,816.1 1238.2,816.1 1235.3,834.7 1232.3,824.9 1229.4,825.9 1225.5,826.9 1222.5,824.9 1219.6,821 1215.6,826.9 1212.7,824.9 1209.8,823.9 1206.8,809.2 1203.9,806.7 1200.9,811.2 1198,812.2 1195.1,809.2 1192.7,815.1 1190.2,820 1187.2,815.1 1184.9,811.2 1181.3,812.2 1177.4,820 1174.5,822 1170.5,822.9 1167.6,830.8 1165.3,821 1162.7,825.9 1160.2,822.9 1157.8,848.4 1155.8,832.7 1153.9,814.1 1150.9,819 1148,821 1147.6,819 1143.7,822 1139.8,818 1136.8,816.1 1134.5,810.2 1131.9,816.1 1129,824.9 1125.5,838.6 1122.1,820 1119.2,833.7 1116.2,826.9 1113.7,819 1111.3,812.2 1108.4,832.7 1105.8,815.1 1103.5,822 1100.5,811.2 1098.6,829.8 1095.6,822.9 1093.7,824.9 1090.2,817.1 1086.8,827.8 1083.5,824.9 1080,826.9 1077,828.8 1073.1,836.7 1069.2,830.8 1065.3,821 1061.3,822.9 1058.4,832.7 1054.9,845.5 1051.5,823.9 1048.6,824.9 1045.6,821 1042.7,827.8 1039.8,835.7 1036.8,832.7 1033.9,826.9 1030,825.9 1026,819 1023.1,835.7 1019.2,826.9 1015.3,821 1012.3,820 1009.4,822.9 1006.4,819 1004.5,826.9 1001.5,823.9 998.6,825.9 995.6,823.9 992.7,819 989.8,822 986.8,819 985.5,836.7 982.9,871 979,846.5 976,826.9 974.1,836.7 971.1,819 968.2,850.4 965.8,822.9 963.3,852.4 959.4,836.7 956.8,824.9 953.1,837.6 950.5,826.9 948.2,835.7 946.2,824.9 944.3,812.2 941.7,816.1 938.8,817.1 935.8,819 932.9,818 929.4,824.9 926.6,817.1 923.1,827.8 920.2,821 918.2,816.1 915.3,817.1 913.3,818 910.4,817.1 907.4,820 904.5,819 900.5,821 897.6,828.8 895.3,809.2 891.7,821 888.8,822 885.5,824.9 881.9,818 879,824.9 876,821 873.1,820 870.2,821 865.3,830.8 863.3,828.8 859.4,830.8 855.5,834.7 852.9,824.9 850.5,829.8 847.6,817.1 845.6,819 843.1,814.1 839.2,826.9 835.8,819 831.9,825.9 830,821 826,822.9 822.1,822.9 820.2,819 816.2,822.9 812.3,822 809.4,809.2 806.4,810.2 803.5,811.2 800.5,830.8 798.6,828.8 795.6,840.6 792.7,830.8 788.8,818 785.8,820 781.9,822.9 778,825.9 776.6,828.8 772.7,827.8 769.8,819 766.8,818 763.9,811.2 760.9,815.1 758,819 755.1,822.9 752.1,833.7 748.8,831.8 746.2,817.1 743.7,830.8 740.9,822.9 738.4,824.9 735.5,826.9 733.1,824.9 730.5,836.7 728,863.1 724.7,836.7 722.7,817.1 720.7,815.1 716.8,816.1 712.9,817.1 710,824.9 707.6,815.1 705.1,822 702.1,826.9 699.2,817.1 696.2,816.1 693.3,812.2 690.4,817.1 686.4,815.1 682.5,816.1 679.6,822.9 677,817.1 673.7,818 670.7,825.9 666.8,811.2 664.9,814.1 662.5,808.2 659,812.2 656.6,828.8 654.1,825.9 651.1,826.9 648.2,829.8 646.2,826.9 643.3,822 640.4,822.9 637.4,830.8 635.1,823.9 631.5,830.8 628.6,823.9 625.3,843.5 622.7,834.7 619.8,814.1 617.8,816.1 615.8,811.2 612.9,824.9 609,830.8 605.1,824.9 602.1,826.9 599.2,817.1 595.8,837.6 593.3,828.8 590.4,820 587.4,826.9 585.5,823.9 583.5,827.8 580.5,819 578.6,814.1 575.6,816.1 572.7,814.1 570.7,821 567.8,836.7 564.9,817.1 561.9,822.9 558,824.9 555.1,833.7 552.1,828.8 549.2,812.2 545.3,825.9 540.4,827.8 537.4,821 535.1,826.9 532.5,818 530.5,825.9 528.6,819 525.6,834.7 522.7,842.5 518.8,829.8 515.5,837.6 511.9,828.8 508,820 505.1,814.1 502.1,808.2 499.2,810.2 495.8,816.1 492.3,811.2 488.8,803.3 486.4,806.3 483.5,804.3 480.5,805.3 477.6,799.4 474.7,796.5 470.7,792.5 465.8,792.5 462.9,811.2 460,802.4 456,799.4 451.1,803.3 447.2,804.3 443.3,810.2 440.4,815.1 437,800.4 434.5,806.3 431.5,801.4 427.6,809.2 425.3,816.1 422.7,788.6 419.8,789.6 415.8,790.6 411.9,793.5 408,788.6 407.6,790.6 402.7,792.5 399.8,805.3 397.2,815.1 393.9,804.3 390.9,803.3 388,795.5 385.1,803.3 383.1,809.2 379.6,792.5 375.3,791.6 371.3,790.6 367.4,787.6 364.5,788.6 360.5,789.6 356.6,795.5 353.7,798.4 349.8,792.5 347.8,798.4 343.9,799.4 340.9,804.3 337.6,792.5 334.1,791.6 331.1,790.6 328.2,799.4 325.3,812.2 323.3,803.3 321.3,811.2 319.4,805.3 317.4,809.2 314.5,804.3 311.5,807.3 309.6,815.1 306.6,807.3 303.7,813.1 300.7,827.8 299.2,811.2 297.8,789.6 292.9,792.5 289,789.6 284.1,793.5 281.1,792.5 277.2,790.6 275.3,803.3 272.9,817.1 269.4,803.3 266.4,797.5 263.5,801.4 260.5,805.3 258,822 256,807.3 254.7,790.6 251.7,792.5 247.8,789.6 243.9,787.6 240.9,789.6 237,791.6 234.1,797.5 230.5,805.3 226.6,796.5 224.3,797.5 221.3,803.3 218,801.4 215.5,811.2 213.1,787.6 211.5,793.5 207.6,788.6 203.7,783.7 199.8,783.3 194.9,784.7 190.5,788.6 186,785.7 181.1,781.4 176.2,782.4 172.3,780.2 167.4,781.8 163.5,779.8 157.6,780.2 151.7,778.8 147.8,779.8 141.9,777.5 136,775.9 130.2,776.5 120.4,773.9 106.6,772.9 87,772 67.4,770.6 38,770" fill="#3dff3d"/></g><g clip-path="url(#sel)"><polygon points="38,551.9 119.3,551.6 124.5,550.7 128.8,549.3 132.2,551.1 141.8,550.7 145.2,550.2 149.5,548.1 153,550.2 158.2,550.5 159.9,545 162.5,540.2 165.1,540.7 166.8,543.3 169.4,540.2 172,541.2 174.6,546.7 178.9,547.6 181.5,545 184.6,536.7 186.7,543.3 188.4,548.5 191,538.9 193.6,540.7 197.1,544.1 200.5,547.6 202.3,538.1 204,532.9 206.6,531.2 208.3,540.7 210.9,531.2 212.6,534.6 214.4,520.8 216.6,508.3 218.7,518.2 219.9,521.7 221.3,518.7 223.9,526 225.6,527.7 228.2,530.3 230.8,525.1 234.3,528.6 237.7,534.6 241.2,542.4 243.8,531.2 247.2,522.5 249.8,525.1 252.4,526 256.2,538.1 257.6,522.5 259.3,499.2 261.1,519.1 262.4,527.7 264.5,516.5 267.1,532.9 270.6,528.6 274,523.4 277.5,531.2 281.8,538.1 284.4,530.3 287,526.8 288.7,528.6 291.3,522.5 293.9,529.4 298.2,538.1 300.8,519.9 305.2,518.2 307.8,525.1 311.2,519.1 316.4,512.1 319.9,519.9 323.3,529.4 326.4,521.7 328.5,522.5 331.6,515.6 334,524.2 336.3,516.5 338.9,515.6 341.5,503.2 344.1,512.1 346.7,520.8 349.2,513 351.8,519.1 354.4,521.7 356.5,520.8 359.3,513 361.4,522.5 363.9,532.9 366.5,537.2 369.1,530.3 370,531.2 372.6,532.9 375.2,528.6 377.8,525.1 380.4,528.6 384.7,531.2 386.4,527.7 389,519.9 391.6,517.3 393.3,522.5 394.7,538.1 397.7,527.7 400.3,523.4 402.9,525.1 404.6,524.2 407.2,538.1 409.8,526 411.5,519.9 414.1,531.2 416.7,520.8 419.3,515.6 421.9,517.3 424.5,517.3 427.1,527.7 429.7,519.1 431.4,513.9 434,515.6 436.6,529.4 438.3,513.9 441.2,508.7 443.5,519.9 445.2,526 447.8,521.7 449.9,522.5 452.7,540.7 455.6,539.8 459.9,538.9 463.4,528.6 466,530.3 468.6,530.3 472,533.8 475.5,533.2 478.9,532.9 482.4,530.3 486.7,526.8 490.2,530.3 491.9,524.2 494.2,517 497.1,526 500.6,526.8 503.1,524.2 504.5,496.6 506.6,469.8 508.3,496.6 509.7,518.2 511.8,505.2 513.9,491.4 516.1,495.7 518.7,483.6 521.3,486.2 523.5,481.4 525.6,487.9 528.2,494 529.9,499.2 531.7,495.7 534.3,512.1 536.9,508.7 539.5,496.6 541.5,486.2 543.8,500 545.5,504.4 548.1,503.5 549.8,507 551.6,500.9 554.2,506.1 556.8,508.7 560.2,511.3 562.8,505.2 566.3,502.6 568.9,508.7 571.4,501.8 574,492.3 575.8,505.2 577.5,521.7 580.1,513.9 581.8,500 584.4,483.1 586.1,500.9 587.5,512.1 589.6,504.4 592.2,499.2 594.3,490.5 596.5,504.4 598.6,495.7 600.8,504.4 602.6,491.4 604.3,480.7 606,493.1 607.8,500.9 610,487.9 611.6,482.8 613.8,493.1 616.4,504.4 618.1,509.6 619.9,506.1 621.6,509.6 623.8,499.2 625.9,498.3 628.5,500.9 631.1,494.9 633.2,500.9 634.9,503.5 637.2,495.7 639.8,508.7 642.3,508.7 644.9,500 646.7,493.1 648.7,502.6 651.9,495.7 655.3,503.5 657.9,507 659.1,515.6 661.4,506.1 663.1,509.6 664.8,500.9 667.1,489.3 669.1,501.8 670.9,509.6 673.5,506.1 675.2,494.9 676.9,484.5 678.7,503.5 681.2,490.5 683.3,500.9 686.4,479.3 689,494 691.3,498.3 693,496.6 695.1,489.7 696.8,482.8 698.5,494.9 701.1,496.6 702,487.9 704.6,479.3 706.8,473.2 708.9,493.1 710.6,501.8 713.2,503.5 715.8,502.6 717.9,494 719.3,487.9 721,499.2 722.8,511.3 725.3,501.8 727.9,493.1 729.7,490.5 732.3,498.3 734.9,500 736.6,505.2 738,484.5 739.5,468.9 741.4,486.2 743.5,500 745.2,507.8 747.3,496.6 749.6,484.5 751.3,494.9 752.5,499.2 754.7,494.9 756.5,495.7 758.2,479.3 759.6,470.6 761.1,496.6 762.5,515.6 765.1,513.9 767.4,496.6 769.4,481.9 771.2,491.4 772.9,499.2 775.5,496.6 777.6,486.2 779.3,475.8 781.5,487.9 783.3,496.6 785,506.1 787.1,496.6 789.3,483.6 791.1,494.9 792.8,485.3 795.4,482.8 797.1,482.8 798.3,488.8 800,480.2 801.6,472.4 803.2,487.9 804.5,503.5 805.8,513.9 808.3,504.4 810.9,495.7 813.5,500.9 816.1,499.2 818.7,508.7 821.3,517.3 823,508.7 825.1,498.3 826.8,487.9 828.2,494 830,484.5 831.3,475 833.1,486.2 835.1,508.7 837.7,510.4 840.3,513 842.1,508.7 844.1,502.6 846.4,509.6 848.6,505.2 851.1,505.2 853.8,509.6 856.4,498.3 859.4,508.7 862.8,508.7 865.4,502.6 868,500 870.6,498.3 873.2,500.9 874.9,493.1 876.6,487.9 878.4,492.3 881,500.9 883.6,494 885.3,498.3 887.9,505.2 889.6,510.4 891.3,507 893.9,507.8 896.5,519.1 898.3,500 899.5,492.3 901.7,507.8 904.3,507.8 906.9,504.4 909,496.6 911.2,505.2 913,494.9 914.3,487.1 916.4,501.8 918.1,509.6 920.2,510.4 922.5,503.5 924.7,501.8 927.7,505.2 929.9,499.2 932,496.6 934.1,507.8 936.3,503.5 938.9,502.6 941.5,503.5 944.1,499.2 946.7,494 948.9,501.8 950.7,513.9 952.7,534.6 954.8,547.6 957.1,548.5 958.3,531.2 959.6,496.6 961.4,470.6 963.1,487.9 964.8,513.9 966.6,539.8 967.9,548.5 971.8,549 978.7,548.1 980.7,546.7 982.1,527.7 983.9,511.3 985.6,513.9 987.3,493.1 989,475.8 990.8,487.9 993.4,505.2 995.6,514.7 997.7,505.2 1000.3,500.9 1002.9,503.5 1005.5,506.1 1008.1,507 1010.7,502.6 1013.2,497.4 1015.8,494 1018.1,501.8 1020.5,492.3 1022.8,497.4 1025.4,505.2 1027.1,499.2 1029.2,490.5 1031.4,498.3 1033.1,503.5 1034,503.5 1036.6,497.4 1038.3,498.3 1040.1,489.7 1041.4,486.2 1043,496.6 1044.4,506.1 1047,504.4 1049.6,506.1 1051.3,507.8 1053,493.1 1054.8,490.5 1056.5,494.9 1058.2,487.9 1059.6,483.6 1061.3,500 1062.5,509.6 1066,510.4 1067.7,496.6 1070.3,491.4 1072.9,486.2 1074.6,484.5 1077.2,486.2 1079.3,487.1 1081.6,489.7 1084.1,495.7 1086.7,494.9 1089.3,497.4 1093.7,497.4 1096.2,494.9 1098.8,491.4 1101.4,488.8 1103.5,488.8 1104.9,477.6 1106.6,468.9 1108.7,474.1 1110.1,477.6 1111.8,491.4 1113.2,499.2 1114.9,491.4 1116.7,482.8 1118.7,492.3 1120.5,501.8 1122.5,509.6 1124.8,502.6 1126.5,497.4 1128.8,504.4 1130.5,499.2 1132.6,505.2 1134.3,507 1136.4,497.4 1138.6,508.7 1140.9,500.9 1143.3,494.9 1145.5,495.7 1147.3,499.2 1149,508.7 1150.2,513 1153.3,512.1 1154.7,496.6 1156.4,472.4 1158.2,496.6 1159.9,516.5 1162.8,513 1164.6,496.6 1166.3,482.8 1168.5,491.4 1171,506.1 1173.2,494 1175.4,495.7 1177.5,500 1179.8,509.6 1182.7,513 1184.4,502.6 1186.5,484.5 1188.2,496.6 1189.6,505.2 1192.2,500 1194.8,494.9 1196.9,489.7 1198.3,508.7 1199.7,521.7 1201.7,517.3 1204.3,513.9 1206.9,509.6 1209.5,507.8 1212.1,506.1 1213.8,500.9 1216.4,500 1219,501.8 1221.6,505.2 1224.2,500.9 1226.8,498.3 1228.5,499.2 1231.1,490.5 1233.7,491.4 1235.4,495.7 1237.7,500 1239.8,503.5 1241.5,513.9 1243.2,521.7 1245,510.4 1246.3,503.5 1248.4,507 1251,513 1252.7,496.6 1254.1,489.7 1255.9,500.9 1257.9,494.9 1259.3,489.7 1261.4,502.6 1263.1,505.2 1265.4,500.9 1267.4,489.7 1269.2,483.6 1270.9,494 1272.6,482.8 1274.4,470.6 1276.1,491.4 1277.5,486.2 1279.2,471.5 1280.9,486.2 1282.7,499.2 1284.7,497.4 1286.8,501.8 1289.1,497.4 1291.1,503.5 1293.4,494 1296,496.6 1297.7,492.3 1299.4,489.7 1301.7,498.3 1303.8,499.2 1306.3,502.6 1308.9,494 1311.5,489.7 1314.1,493.1 1316.2,496.6 1317.9,484.5 1319.3,475.8 1321,492.3 1322.8,505.2 1324.5,499.2 1326.6,507 1328.8,495.7 1331.4,488.8 1334,488.8 1336.3,496.6 1338,490.5 1339.2,487.1 1341.4,503.5 1343.5,496.6 1345.2,494.9 1347,508.7 1349.6,499.2 1351.3,507.8 1353,486.2 1354.4,475.8 1356.5,491.4 1359.1,507 1361.7,514.7 1363.4,515.6 1365.1,513 1366,510.4 1369.5,509.6 1372.1,511.3 1374.6,513 1377.2,505.2 1379,499.2 1380.7,507 1382.4,513.9 1385,514.7 1387.6,513 1389.3,508.7 1392.8,508.7 1394.5,496.6 1396.6,481.9 1398.5,494.9 1400.6,508.7 1402.3,503.5 1404,500.9 1406.1,506.1 1408.4,510.4 1410.1,496.6 1411.3,491.4 1413.6,493.1 1415.3,494.9 1417.5,505.2 1419.3,502.6 1421.3,508.7 1422.7,511.3 1424.8,503.5 1426.5,511.3 1427.9,518.2 1430,505.2 1431.7,496.6 1433.8,505.2 1436,509.6 1438.3,512.1 1440.4,508.7 1442.1,504.4 1444.2,501.8 1446.4,507.8 1449,514.7 1450.7,502.6 1451.9,497.4 1453.8,508.7 1455.9,502.6 1457.6,504.4 1459.7,499.2 1461.5,494.9 1463.2,503.5 1464.9,508.7 1468,509.6 1471.5,512.1 1474.1,507.8 1476.7,509.6 1479.3,501.8 1481.5,489.7 1483.6,499.2 1485.3,504.4 1487,506.1 1488.3,519.1 1489.6,539.8 1490.8,548.1 1493.1,548.5 1494.3,531.2 1495.3,505.2 1496.2,487.9 1500,487.9 1500.9,505.2 1502.6,531.2 1504.7,548.1 1509.5,549 1514.7,547.6 1516.1,539.8 1517.3,513.9 1518.5,496.6 1521.6,487.9 1524.2,489.3 1525.9,501.8 1527.7,512.1 1529.4,517.3 1531.7,508.7 1533.7,500.9 1536.3,491.4 1538.1,499.2 1539.8,509.6 1542.4,514.7 1545.8,517.3 1548.4,518.2 1550.2,504.4 1551.4,497.4 1553.1,510.4 1555.3,498.3 1557.9,500.9 1560.5,508.7 1563.1,513.9 1566.6,513.9 1569.2,512.1 1571.8,503.5 1574.4,498.3 1577,503.5 1580.4,512.1 1583,515.6 1585.6,516.5 1587.3,496.6 1589.1,484.5 1590.8,494 1592.9,502.6 1596,510.4 1599.4,514.7 1602.9,513.9 1605.5,496.6 1608.1,495.7 1610.7,493.1 1614.1,493.1 1616.7,497.4 1618.8,500.9 1621.1,492.3 1623.6,499.2 1625.4,505.2 1627.1,512.1 1629.2,503.5 1631.4,509.6 1633.7,503.5 1635.8,505.2 1638.3,502.6 1640.1,487.9 1641.5,477.6 1643.2,491.4 1644.7,505.2 1647,505.2 1649.2,501.8 1651.3,507.8 1653.9,515.6 1656.5,519.1 1659.1,507.8 1661.7,519.9 1664.3,508.7 1666.9,503.5 1669.5,513.9 1672.1,507.8 1674.7,501.8 1676.4,507.8 1679,516.5 1681.1,499.2 1684.2,498.3 1686.8,512.1 1689.4,508.7 1691.9,506.1 1694.5,504.4 1697.1,512.1 1700.4,507.8 1703,506.1 1705.6,507 1707.7,500.9 1709.6,497.4 1711.1,508.7 1712.8,517.3 1714.6,513.9 1716.8,519.9 1719.4,523.4 1722,520.8 1724.3,513.9 1726.3,519.9 1729.4,527.7 1731.5,521.7 1734.1,516.5 1736.7,513.9 1739.8,523.4 1741.9,515.6 1743.6,502.6 1745.7,507.8 1747.4,503.5 1749.3,498.3 1751.4,507 1753.7,515.6 1754.9,519.9 1756.6,516.5 1759.2,524.2 1761.8,527.7 1764.4,532 1767,531.2 1769.6,534.6 1772.2,537.2 1774.8,538.1 1777.3,540.7 1779.9,541.5 1782.5,546.7 1785.1,547.6 1786.9,543.3 1788.6,532.9 1791.7,525.6 1794.6,532.9 1797.2,540.7 1799.8,546.7 1803.3,549.3 1807.6,549 1811.9,547.6 1815.4,549.3 1818.8,549.7 1822.8,547.9 1826.6,550.2 1833.5,550.5 1840.5,549.8 1844.8,547.9 1848.2,549.8 1852.6,551.4 1888,551.4 1888,552.6 1851.7,552.6 1847.4,553.6 1843.1,555.9 1837,553.6 1827.5,553.3 1824,554.5 1820.6,556.8 1817.1,554.5 1812.8,555.4 1810.2,557.1 1806.7,555.4 1802.4,554.5 1798.1,555.4 1795.5,562.3 1792.9,570.9 1790.3,577 1787.2,569.2 1785.5,557.1 1783.4,556.2 1780.8,557.1 1777.3,561.4 1773.9,564.9 1771.3,565.8 1768.7,568.3 1765.2,572.7 1762.6,575.3 1760.1,575.3 1757.5,583 1754,583.9 1752.3,595.1 1750.5,602.9 1747.9,599.5 1744.5,594.3 1741.9,594.3 1738.8,580.4 1735.8,593.4 1733.2,590 1729.8,583 1727.2,575.3 1724.6,581.3 1722.5,585.6 1719.4,577.9 1717.7,579.6 1715.1,588.2 1712.5,591.7 1709.9,590.8 1707.3,596 1704.7,589.1 1703,590.8 1700.4,603.8 1697.1,602.9 1694.5,594.3 1692.5,597.7 1690.2,595.1 1686.8,583 1683.3,610.7 1680.4,600.3 1677.2,589.1 1674.7,596.9 1671.2,595.1 1668.6,592.6 1665.1,602.1 1662,581.3 1660,586.5 1657.4,588.2 1654.8,590 1651.3,593.4 1648.7,599.5 1646.1,600.3 1642.7,614.2 1640.6,606.4 1638.3,609 1635.4,596.9 1633.2,598.6 1630.6,592.6 1628,602.1 1625.4,598.6 1621.1,609 1618.5,605.5 1615.9,600.3 1612.9,616.8 1610.2,609 1608.1,611.6 1604.6,611.6 1601.2,591.7 1597.7,596.9 1594.2,599.5 1590.8,600.3 1587.3,605.5 1583.9,585.6 1581.3,600.3 1577.8,594.3 1573.5,603.8 1568.3,605.5 1564.9,598.6 1562.3,593.4 1558.8,596.9 1555.3,602.1 1552.8,591.7 1550.2,604.7 1547.6,592.6 1545.8,593.4 1543.2,590.8 1540.6,591.7 1538.6,609.8 1536.3,602.1 1533.7,596.9 1531.1,594.3 1528.5,592.6 1525.1,603.8 1522.5,622.8 1520.2,634.9 1518.2,622.8 1516.4,600.3 1514.7,565.8 1513,556.2 1506.1,555 1503.5,556.2 1501.7,565.8 1499.5,600.3 1497.4,621.1 1494.8,626.3 1493.6,583 1492.2,555.4 1489.1,556.2 1487.9,565.8 1486.2,586.5 1483.6,607.2 1481,614.2 1479.3,610.7 1476.7,596 1474.1,590 1471.5,589.1 1468.9,586.5 1466.3,590 1462.8,596.9 1460.2,602.1 1457.6,596.9 1455.1,615 1451.6,594.3 1449.9,598.6 1447.3,586.5 1445.5,593.4 1442.9,609.8 1440.4,602.9 1437.8,596.9 1435.2,598.6 1432.6,602.9 1429.6,596.9 1427.4,599.5 1424.8,594.3 1422.2,598.6 1420,591.7 1417.5,611.6 1415.3,605.5 1412.7,612.4 1410.1,602.9 1407.5,591.7 1404.9,593.4 1402.3,592.6 1399.7,585.6 1397.5,609 1395.4,630.6 1393.3,609 1391.1,591.7 1388.1,586.5 1386.4,590 1384.2,585.6 1382.4,596.9 1380.2,615.9 1377.2,590 1375,598.6 1373.3,591.7 1371.2,583.9 1368.6,590 1366,595.1 1365.1,598.6 1363.4,592.6 1360.8,588.2 1357.4,595.1 1354.8,612.4 1352.2,617.6 1349.6,595.1 1347,609 1344.4,597.7 1340.9,596.9 1338.3,603.8 1335.7,605.5 1332.8,616.8 1330.6,607.2 1328,599.5 1324.8,594.3 1322.4,602.1 1320.2,590.8 1318.4,603.8 1315.5,615 1312.7,600.3 1310.7,604.7 1308.1,609.8 1304.6,596.9 1302.9,597.7 1300.3,595.1 1297.7,605.5 1295.1,607.2 1292.5,608.1 1289.6,595.1 1287.3,605.5 1284.7,595.1 1282.1,599.5 1279.5,600.3 1276.9,599.5 1274.7,604.7 1272.6,616.8 1269.5,607.2 1267.4,612.4 1264.8,602.1 1262.2,602.9 1260.5,600.3 1257.9,618.5 1254.5,604.7 1252.2,608.1 1250.1,592.6 1248.1,605.5 1245.3,616.8 1243.7,600.3 1242.4,585.6 1240.6,588.2 1238,605.5 1235.4,624.5 1232.5,600.3 1230.3,616.8 1226.8,605.5 1223.3,601.2 1220.8,596 1218.2,598.6 1215.6,602.1 1212.1,596.9 1209.5,591.7 1206.9,595.1 1204.3,600.3 1202.1,590 1200.3,594.3 1198.6,583.9 1196.9,600.3 1195.2,614.2 1192.2,600.3 1189.6,598.6 1187,594.3 1184.8,597.7 1182.7,591.7 1180.6,595.1 1178.4,602.9 1175.4,615.9 1172.3,602.1 1170.1,594.3 1168,595.1 1165.4,612.4 1163.3,602.1 1161.1,593.4 1158.5,585.6 1155.6,607.2 1153.3,590.8 1151.6,592.6 1148.1,593.4 1145.5,619.4 1143.8,605.5 1142.1,590.8 1138.6,589.1 1136.9,593.4 1134.3,600.3 1131.7,595.1 1129.1,598.6 1127.4,596 1124.8,603.8 1122.2,591.7 1120.5,588.2 1118.7,593.4 1116.7,612.4 1114.9,625.4 1112.7,614.2 1110.9,621.1 1108.4,636.6 1104.9,630.6 1102.6,629.7 1100.6,617.6 1098.8,610.7 1097.1,613.3 1094.9,602.9 1092.8,609.8 1091.1,605.5 1088.5,599.5 1085.5,609 1082.4,617.6 1079.8,609 1077.6,610.7 1075.5,609.8 1072.9,625.4 1069.4,609 1066.9,596 1063.4,594.3 1060.8,607.2 1057.9,616.8 1054.8,610.7 1052.2,603.8 1049.6,605.5 1047,604.7 1044.4,606.4 1042.3,603.8 1040.1,610.7 1037.5,608.1 1034,609 1033.1,598.6 1031.4,604.7 1027.9,605.5 1025.4,595.1 1023.6,600.3 1021,618.5 1018.4,613.3 1015.8,609 1013.2,607.2 1010.7,614.2 1007.7,596.9 1005.5,604.7 1003.7,596.9 1002,607.2 999.4,605.5 996.8,598.6 994.6,587.4 992.5,598.6 989.9,612.4 987.3,608.1 984.7,584.8 983,583 980.4,565.8 978.7,556.2 968.3,555.4 966.2,557.1 964.5,591.7 962.8,615 960.5,600.3 958.4,565.8 957.1,555.4 953.6,556.2 951.9,565.8 950.1,586.5 947.5,600.3 944.9,609 942.7,616.8 940.3,599.5 938,603.8 935.4,604.7 932.8,590.8 930.2,593.4 927.7,598.6 925.4,589.1 923.3,608.1 920.2,595.1 918.1,600.3 914.7,596.9 912.1,598.6 909.5,597.7 906.9,596 904.3,586.5 901.7,584.8 899.1,586.5 897,596.9 894.8,583 892.2,596 888.8,592.6 886.7,583.9 884.4,585.6 881.5,587.4 879.8,603.8 877.5,627.1 874.9,600.3 873.2,612.4 870.6,604.7 868.3,598.6 865.9,605.5 863.7,593.4 861.6,583.9 859.4,590.8 856.8,596.9 853.3,598.6 850.4,608.1 846.4,596.9 844.3,586.5 842.1,595.1 839.5,584.8 837.7,587.4 835.1,587.4 832.6,595.1 829.6,605.5 827.9,598.6 825.1,615 822.2,593.4 819.6,578.7 816.1,586.5 812.7,595.1 809.2,604.7 807.5,598.6 804.9,590.8 802.3,603.8 800.2,615 797.1,604.7 795.4,602.9 792.8,604.7 790.2,614.2 787.6,608.1 785.5,600.3 783.3,607.2 780.7,609.8 777.2,610.7 775,605.5 772.9,610.7 770.3,603.8 768.6,605.5 765.6,609 763.4,600.3 760.8,590 758.2,602.1 755.3,616.8 753,609 750.4,599.5 747.8,621.1 745.2,600.3 743.5,609.8 740,610.7 736.6,611.6 734,597.7 730.5,600.3 727.6,615 724.5,609 721.9,592.6 720.2,605.5 718.1,626.3 715,605.5 712.4,595.1 709.8,590 707.2,594.3 704.6,593.4 702,600.3 701.1,592.6 698.5,598.6 695.9,607.2 693.4,598.6 690.8,605.5 688.2,593.4 685.9,618.5 683.8,600.3 681.2,602.9 677.8,594.3 675.2,611.6 672.3,595.1 670,605.5 667.8,594.3 665.7,602.9 663.1,596.9 660.5,589.1 657.9,590 655,611.6 651.9,594.3 649.8,592.6 647.5,602.1 644.9,620.2 641.5,593.4 639.4,589.1 637.7,593.4 635.4,618.5 632.8,600.3 631.1,595.1 627.6,598.6 625.1,602.1 622.8,621.1 620.7,607.2 619,590.8 617.3,591.7 615.5,584.8 614.2,596.9 612.1,609 610,600.3 607.8,602.1 605.5,593.4 602.6,610.7 600.5,595.1 598.6,609 596.9,600.3 595.3,609 593.1,628.9 590.5,605.5 588.2,596.9 585.8,593.4 582.7,602.1 579.2,593.4 577.2,588.2 574.9,595.1 572.3,604.7 568.9,596 566.3,591.7 563.7,600.3 561.9,612.4 559.9,590.8 557.6,595.1 555,598.6 552.4,605.5 549.8,621.9 547.2,593.4 544.6,600.3 542.9,598.6 540.3,619.4 537.4,595.1 535.1,600.3 532.9,588.2 530.8,603.8 529.1,595.1 527.4,600.3 524.8,612.4 522.2,625.4 519.6,617.6 517.3,631.5 514.4,606.4 512.7,609 510.4,598.6 508.3,589.1 506.9,603.8 505.4,627.1 504,609 502.8,583 500.6,576.1 496.2,576.1 493.1,579.6 491,576.1 488.4,572.7 485,577 482.4,582.2 479.8,572.7 476.3,571.8 473.8,568.3 469.4,570.1 466,570.9 463.4,575.3 460.8,570.1 459.1,564.9 455.6,565.8 453,563.2 450.4,564 447.8,574.4 445.2,575.3 442.6,583 440.6,590 438.3,581.3 435.4,570.1 433.1,576.1 429.7,581.3 427.9,576.1 425.3,581.3 421,582.2 417.6,583 414.1,576.1 411.5,570.9 408.9,570.1 406.3,568.3 402.9,582.2 400.3,576.1 397.7,575.3 394.2,571.8 391.6,565.8 389.4,576.1 387.3,565.8 385.6,564 383,575.3 380.4,570.9 378.6,572.7 375.2,575.3 372.6,569.2 370,570.1 369.1,574.4 366.5,570.1 363.9,567.5 361.4,574.4 358.8,583.9 354.4,574.4 351,569.2 347.5,581.3 343.2,577 340.6,580.4 338,577.9 335.1,588.2 332.8,579.6 330.2,589.1 326.8,572.7 323.3,569.2 320.7,572.7 317.8,583 314.7,579.6 311.2,575.3 307.8,574.4 305.7,583.9 302.6,572.7 300,570.9 297.4,566.6 293.9,572.7 290.5,583 287.9,579.6 284.4,570.9 280.1,563.2 275.8,572.7 271.4,577 268,569.2 266.2,572.7 264.5,568.3 262.4,577.9 261.1,567.5 259.3,569.2 257.6,581.3 255,564 252.4,572.7 249,583 245.5,590.8 242.9,576.1 240.3,561.4 237.7,564 234.3,572.7 230.8,579.6 227.3,576.1 224.8,570.9 222.2,568.3 219.6,572.7 217.8,569.2 215.2,578.7 211.8,565.8 210.1,572.7 208.3,562.3 205.4,581.3 203.1,591.3 200.9,572.7 199.7,555.4 196.2,556.8 192.8,560.6 190.2,567.5 188.4,562.3 186.7,554.5 185,560.6 182.9,570.6 180.7,562.3 178.9,556.2 174.6,556.8 170.3,560.2 166.8,559.7 163.4,562.3 160.8,568.3 159,564 157.3,553.6 152.1,554.5 147.8,557.1 145.2,554.2 141.8,553.6 132.2,553.3 128.8,554.5 124.5,553.1 119.3,552.6 38,552.6" fill="#66ff66"/><polygon points="38,768.8 67.4,768 87,766.7 106.6,765.5 120.4,765.1 130.2,762.7 136,763.7 141.9,762.2 144.9,760.2 148.8,757.3 151.7,760.2 154.7,759.2 157.6,760.6 161.9,756.3 165.1,759.2 169,757.6 172.3,759.2 176.8,756.9 180.2,758.2 186,753.3 190,755.3 193.9,753.7 195.8,755.3 199.8,752 202.7,755.3 205.6,754.3 208.6,749.4 211.5,746.5 213.5,745.5 214.9,732.7 216.4,720 218.4,730.8 220,734.7 221.9,728.8 224.3,739.6 227.2,737.6 229.2,732.7 231.5,723.9 233.7,734.7 235.6,743.5 238,744.5 240.4,743.5 243.9,748.4 246.8,748.4 250.7,744.5 254.7,744.1 256,728.8 257.6,709.2 259.2,698.4 261.1,719 262.5,726.9 264.5,717.1 266.4,728.8 268.4,733.7 270.4,727.8 272.3,730.8 274.3,722 276.2,736.7 277.6,745.5 281.1,747.5 284.1,747.5 287,749.4 290.9,750.4 294.9,748.4 297.8,745.5 299.2,732.7 300.7,720 304.7,722 307.6,725.9 310.5,722.9 312.5,709.2 314.5,699.4 316,713.1 317.4,722 319.4,716.1 321.3,712.2 323.3,721 324.7,726.9 326.6,716.1 329.2,726.9 331.7,746.5 335.1,747.5 338,747.5 340,736.7 341.9,724.9 344.3,717.1 346.8,727.8 349.8,734.7 352.7,738.6 356.6,736.7 359.6,741.6 361.5,747.5 364.5,743.5 367.4,747.5 371.3,744.5 375.3,741.6 378.2,743.5 380.2,740.6 381.5,748.4 383.1,728.8 384.7,723.9 386,734.7 389,719 391.5,709.2 393.9,715.1 396.4,725.9 398.8,716.1 401.7,726.9 404.7,743.5 407.6,745.5 408,747.5 410.9,749.4 414.9,746.5 418.8,744.5 422.7,750.4 424.7,728.8 426.6,707.3 428.6,722.9 431.5,719 434.5,712.2 436.8,704.9 439,716.1 441.3,712.2 444.3,717.1 448.2,722.9 452.1,730.8 455.1,741.6 460.9,743.5 463.9,730.8 466.8,743.5 470.7,744.1 475.6,741.6 478.6,738.6 481.5,730.8 484.1,735.7 486.4,731.8 489.4,732.7 492.3,726.9 496.2,722 502.1,720 506,716.1 510,711.2 512.9,710.2 515.8,704.3 518.2,712.2 521.7,708.2 526.6,703.3 529.2,711.2 531.5,698.4 533.5,711.2 536.4,705.3 540.4,704.3 544.3,706.3 547.2,711.2 550.2,712.2 551.7,722 554.1,706.3 557,706.3 560,705.3 563.9,691.6 566.8,696.5 570.7,701.4 573.7,711.2 575.6,722.9 579,728.8 580.9,722.9 582.5,699.4 584.5,687.6 586.4,699.4 588.4,688.6 590.4,699.4 592.7,710.2 596.2,709.2 598.6,702.4 601.1,711.2 604.1,709.2 607,706.3 610,695.5 611.9,687.6 614.3,699.4 615.8,715.1 617.8,731.8 620.7,722.9 622.7,699.4 624.1,688.6 626.6,691.6 629.2,682.7 631.5,693.5 633.9,707.3 636.4,717.1 639.4,701.4 641.3,691.6 643.3,701.4 645.3,708.2 648.2,704.3 651.1,700.4 654.1,697.5 657,701.4 659,720 660.9,725.9 662.9,724.9 666.4,731.8 669.8,722.9 672.7,716.1 675.6,712.2 677.6,706.3 679.6,714.1 681.5,706.3 684.1,712.2 686.4,708.2 689.4,716.1 692.3,718 695.8,719 698.2,705.3 701.1,697.5 704.1,693.5 706.4,701.4 709,716.1 711.9,717.1 714.9,716.1 717.8,720 720.7,716.1 722.7,722 724.7,726.9 726.6,709.2 728.6,687.6 731.1,683.7 733.5,697.5 735.8,709.2 738.4,701.4 741.3,698.4 744.3,706.3 747.2,720 750.2,709.2 754.1,698.4 757,702.4 760,711.2 762.5,725.9 764.9,722.9 767.8,705.3 770.7,701.4 774.3,693.5 776.6,701.4 778,705.3 781.9,709.2 785.8,707.3 788.8,702.4 791.3,718 793.7,695.5 796.6,678.8 799.6,693.5 802.5,695.5 804.5,713.1 807.4,728.8 810.4,715.1 813.3,703.3 816.2,697.5 819.2,701.4 822.7,709.2 827,706.3 830.9,704.3 834.5,694.5 836.8,704.3 840.7,711.2 844.7,712.2 847.6,714.1 850.5,718 853.5,712.2 856.4,704.3 859.4,699.4 861.9,703.3 864.3,698.4 867.2,702.4 870.2,706.3 873.1,702.4 875.5,708.2 878,704.3 880.9,706.3 883.9,704.3 886.8,706.3 890.7,712.2 893.7,720 895.6,725.9 897.6,705.3 899.6,688.6 901.5,706.3 903.9,697.5 906.4,712.2 908.4,722 911.3,711.2 914.3,704.3 916.8,701.4 919.2,706.3 921.1,712.2 924.1,702.4 927,708.2 930,718 931.9,722.9 934.9,720 937.8,722.9 941.1,714.1 943.7,719 945.6,722 948.6,708.2 951.5,697.5 954.5,708.2 957.4,718 960.4,714.1 962.7,710.2 965.3,720 966.6,726.9 968.6,704.3 971.1,712.2 974.1,709.2 977,712.2 979,701.4 980.9,691.2 984.9,691.2 986.8,712.2 989.8,717.1 991.7,713.1 993.7,720 996.6,708.2 999.6,710.2 1002.5,716.1 1006.4,711.2 1009.4,717.1 1012.3,706.3 1014.3,700.4 1017.2,717.1 1020.2,719 1023.1,717.1 1027,718 1030,719 1032.9,714.1 1035.8,711.2 1038.8,699.4 1041.7,709.2 1044.3,702.4 1047.6,719 1050.5,710.2 1053.5,711.2 1056.4,707.3 1059.4,701.4 1062.3,713.1 1065.3,714.1 1068.2,714.1 1071.1,704.3 1074.1,703.3 1077,700.4 1080,701.4 1082.9,708.2 1085.8,709.2 1088.8,703.3 1091.3,712.2 1094.1,707.3 1096.6,702.4 1099.6,709.2 1102.5,718 1105.5,728.8 1108.4,725.9 1111.3,713.1 1114.3,701.4 1117.2,700.4 1120.2,703.3 1122.1,701.4 1124.1,708.2 1126.6,690.6 1129,699.4 1131.9,705.3 1134.5,707.3 1136.4,713.1 1139.2,699.4 1141.7,706.3 1144.7,710.2 1147.6,712.2 1148,710.2 1150.9,707.3 1153.9,710.2 1156.2,728.8 1158.2,711.2 1161.3,710.2 1163.7,708.2 1166.6,698.4 1169.6,702.4 1171.9,704.3 1174.5,695.5 1177.4,709.2 1179.8,704.3 1181.7,699.4 1184.3,712.2 1186.2,718 1189.2,716.1 1191.5,712.2 1194.1,719 1197.4,728.8 1201.3,724.9 1203.9,729.8 1205.8,719 1208.8,712.2 1211.7,705.3 1214.7,694.5 1217.6,705.3 1220.5,710.2 1224.1,714.1 1226.4,706.3 1229.4,696.5 1232.3,704.3 1234.9,712.2 1237.2,707.3 1239.8,717.1 1241.7,714.1 1244.1,722.9 1246,731.8 1248,733.7 1250,721 1251.9,702.4 1254.5,687.6 1256.2,712.2 1258.8,700.4 1261.3,708.2 1263.7,701.4 1266.6,697.5 1270.5,694.5 1272.5,681.8 1274.5,676.9 1277,698.4 1279,689.6 1280.9,699.4 1283.3,683.7 1284.3,680.8 1286.2,697.5 1288.8,686.7 1291.1,701.4 1294.1,685.7 1296,694.5 1299,682.7 1301.5,695.5 1302.9,701.4 1304.9,694.5 1307.2,718 1308.8,717.1 1310.7,694.5 1313.7,695.5 1316.6,685.7 1319.2,673.9 1321.5,695.5 1324.5,685.7 1326.8,704.3 1328.4,719 1330.7,687.6 1333.3,691.6 1335.8,696.5 1338.6,688.6 1340.5,697.5 1342.5,686.7 1344.5,677.8 1346,699.4 1348,719 1350,711.2 1352.3,695.5 1354.3,687.6 1356.8,698.4 1359.4,706.3 1361.7,699.4 1363.7,702.4 1366.6,689.6 1369.2,699.4 1371.5,705.3 1374.5,703.3 1377.4,707.3 1380.4,712.2 1382.7,722 1384.9,717.1 1386.8,708.2 1388.8,716.1 1391.1,709.2 1393.5,708.2 1396,697.5 1399,696.5 1401.3,704.3 1403.9,698.4 1406.8,700.4 1409.8,700.4 1412.7,705.3 1415.1,712.2 1417,708.2 1419.6,714.1 1421.9,708.2 1424.5,706.3 1426.8,701.4 1429.4,722.9 1431.3,722 1433.3,723.9 1435.3,705.3 1436.6,693.5 1439.2,701.4 1441.5,697.5 1444.1,706.3 1446.4,714.1 1448.6,722.9 1450.5,699.4 1451.9,690.6 1454.3,702.4 1456.8,700.4 1459.4,709.2 1461.3,685.7 1463.7,701.4 1465.3,711.2 1467.6,714.1 1470,722.9 1472.5,709.2 1474.5,702.4 1477,714.1 1479.8,718 1482.3,724.9 1485.3,718 1488.2,712.2 1491.1,711.2 1494.1,711.2 1497,710.2 1500,707.3 1502.9,704.3 1505.3,696.5 1507.2,690.6 1509.2,711.2 1512.7,712.2 1515.1,687.6 1517.6,684.7 1518,684.7 1520,683.7 1521.9,693.5 1524.9,705.3 1526.8,724.9 1529.8,712.2 1532.1,709.2 1534.7,710.2 1537.6,718 1540,722.9 1543.5,719 1546.4,722 1549,722 1551.7,712.2 1554.3,704.3 1557.2,722.9 1561.1,719 1565.1,722 1567,708.2 1569,698.4 1571.3,710.2 1573.9,704.3 1576.8,712.2 1580.7,722.9 1584.7,722 1588.6,712.2 1591.5,705.3 1594.1,714.1 1596.4,721 1599.4,718 1604.3,712.2 1606.2,716.1 1608.2,699.4 1611.1,705.3 1614.1,700.4 1616,709.2 1618,715.1 1620.9,714.1 1623.9,716.1 1625.8,722 1627.8,713.1 1630.7,712.2 1633.7,707.3 1636.6,716.1 1640.5,717.1 1643.5,714.1 1645.5,715.1 1647.4,702.4 1649,693.1 1651.3,712.2 1653.7,711.2 1656.2,716.1 1659.6,720 1663.1,713.1 1666,706.3 1669,704.3 1671.3,712.2 1673.9,705.3 1676.4,699 1678.8,710.2 1680.7,717.1 1683.7,711.2 1687.6,710.2 1690.5,713.1 1692.5,718 1694.5,715.1 1697.4,722.9 1700,731.8 1703.3,725.9 1705.3,728.8 1706.6,737.6 1709.2,726.9 1712.1,736.7 1715.1,725.9 1717,722.9 1720,733.7 1722.9,743.5 1725.8,732.7 1728.8,728.8 1731.7,731.8 1734.1,742.5 1736.6,731.8 1739.2,722.5 1742.5,732.7 1745.5,732.7 1749.4,722.9 1752.3,728.8 1755.3,741.6 1758.8,748.4 1761.5,739.6 1764.7,745.5 1767,749.4 1770,747.5 1772.5,751.4 1774.9,760.2 1778.8,763.1 1781.7,762.2 1785.1,757.3 1788.2,754.3 1791.5,757.3 1794.5,761.2 1797.4,760.2 1801.3,759.2 1804.3,762.2 1807.2,762.2 1812.1,760.6 1815.1,757.3 1819,751.4 1821.5,757.3 1823.9,764.1 1827.8,766.5 1835.6,766.1 1841.5,767.1 1849.4,766.5 1859.2,768.4 1888,768.8 1888,770 1859.2,770.4 1849.4,772.4 1841.5,772 1835.6,772.9 1827.8,772.4 1822.9,774.9 1820.9,779.8 1818,788.6 1815.1,783.7 1813.1,776.9 1809.2,775.9 1805.3,776.9 1801.3,778.8 1798.4,777.8 1794.5,775.9 1791.5,779.8 1788.2,782.7 1784.7,780.8 1780.7,775.9 1776.8,776.9 1773.9,780.8 1770.9,785.7 1767.4,793.5 1764.1,788.6 1760.7,807.3 1757.6,791.6 1754.3,798.4 1751.3,807.3 1747.8,817.1 1744.5,811.2 1740.5,810.2 1736.6,805.3 1733.7,797.5 1731.7,807.3 1728.8,814.1 1725.8,820 1722.9,801.4 1719,803.3 1714.1,806.3 1711.1,806.3 1708.2,817.1 1705.8,803.3 1704.3,807.3 1700.4,822.9 1697.4,809.2 1693.5,826.9 1690.9,816.1 1688.6,826.9 1685.6,837.6 1681.7,824.9 1678.8,834.7 1675.8,843.5 1672.9,829.8 1670,831.8 1667,821 1664.7,824.9 1662.1,816.1 1658.2,813.1 1655.3,838.6 1651.3,826.9 1648.4,826.9 1645.5,819 1642.5,831.8 1638.6,824.9 1635.6,821 1633.3,824.9 1630.2,834.7 1626.8,832.7 1624.3,819 1620.9,822 1618,822.9 1615.1,829.8 1612.1,830.8 1608.2,836.7 1605.3,824.9 1603.3,823.9 1600.4,819 1596.4,822.9 1592.5,822.9 1587.6,831.8 1583.7,817.1 1580.7,821 1576.8,824.9 1572.9,839.6 1570.5,837.6 1568.6,840.6 1566.6,832.7 1564.7,816.1 1560.2,824.9 1555.6,817.1 1553.3,822.9 1550.4,823.9 1546.4,820 1542.5,816.1 1539.2,822.9 1535.6,819 1532.7,824.9 1530.2,832.7 1526.2,817.1 1523.5,831.8 1520.9,835.7 1518,842.5 1517.6,842.5 1515.1,843.5 1512.3,824.9 1509.8,830.8 1507.2,836.7 1503.9,824.9 1500.9,829.8 1497.4,834.7 1495.5,828.8 1493.1,840.6 1491.1,834.7 1488.2,829.8 1484.3,827.8 1480.4,826.9 1477.4,822.9 1475.1,818 1472.5,822 1469.6,819 1466.6,813.1 1463.7,817.1 1460.7,821 1458.8,816.1 1455.8,838.6 1452.9,822.9 1450.9,826.9 1448.4,816.1 1446,832.7 1443.1,829.8 1440.2,834.7 1437.2,829.8 1434.7,826.9 1432.7,816.1 1430.4,817.1 1428.4,824.9 1425.5,839.6 1421.5,826.9 1418.6,821 1415.6,826.9 1413.1,824.9 1410.4,836.7 1407.8,827.8 1405.8,833.7 1402.5,834.7 1400,826.9 1398,831.8 1395.5,836.7 1391.1,826.9 1388.2,818 1385.6,821 1383.3,820 1380.7,816.1 1378.4,824.9 1375.5,826.9 1372.5,819 1370.5,824.9 1368.6,821 1366,838.6 1363.7,826.9 1361.7,830.8 1358.8,840.6 1355.8,849.4 1352.9,840.6 1350,832.7 1347,818 1345.1,830.8 1343.1,853.3 1341.1,844.5 1338.2,826.9 1335.3,833.7 1332.3,834.7 1329.4,824.9 1326.8,816.1 1324.5,824.9 1322.5,838.6 1319.6,825.9 1316.2,834.7 1312.7,836.7 1309.8,828.8 1307.8,829.8 1305.5,820 1302.9,834.7 1300,825.9 1298,836.7 1295.5,826.9 1292.7,845.5 1290.2,822.9 1287.6,845.5 1285.3,824.9 1282.9,835.7 1280.4,828.8 1277.8,843.5 1275.1,826.9 1272.5,833.7 1267.6,833.7 1265.3,829.8 1263.3,833.7 1260.7,830.8 1257.8,837.6 1255.5,824.9 1253.5,837.6 1250,822 1247.6,806.3 1245.1,812.2 1243.1,811.2 1240.5,816.1 1238.2,816.1 1235.3,834.7 1232.3,824.9 1229.4,825.9 1225.5,826.9 1222.5,824.9 1219.6,821 1215.6,826.9 1212.7,824.9 1209.8,823.9 1206.8,809.2 1203.9,806.7 1200.9,811.2 1198,812.2 1195.1,809.2 1192.7,815.1 1190.2,820 1187.2,815.1 1184.9,811.2 1181.3,812.2 1177.4,820 1174.5,822 1170.5,822.9 1167.6,830.8 1165.3,821 1162.7,825.9 1160.2,822.9 1157.8,848.4 1155.8,832.7 1153.9,814.1 1150.9,819 1148,821 1147.6,819 1143.7,822 1139.8,818 1136.8,816.1 1134.5,810.2 1131.9,816.1 1129,824.9 1125.5,838.6 1122.1,820 1119.2,833.7 1116.2,826.9 1113.7,819 1111.3,812.2 1108.4,832.7 1105.8,815.1 1103.5,822 1100.5,811.2 1098.6,829.8 1095.6,822.9 1093.7,824.9 1090.2,817.1 1086.8,827.8 1083.5,824.9 1080,826.9 1077,828.8 1073.1,836.7 1069.2,830.8 1065.3,821 1061.3,822.9 1058.4,832.7 1054.9,845.5 1051.5,823.9 1048.6,824.9 1045.6,821 1042.7,827.8 1039.8,835.7 1036.8,832.7 1033.9,826.9 1030,825.9 1026,819 1023.1,835.7 1019.2,826.9 1015.3,821 1012.3,820 1009.4,822.9 1006.4,819 1004.5,826.9 1001.5,823.9 998.6,825.9 995.6,823.9 992.7,819 989.8,822 986.8,819 985.5,836.7 982.9,871 979,846.5 976,826.9 974.1,836.7 971.1,819 968.2,850.4 965.8,822.9 963.3,852.4 959.4,836.7 956.8,824.9 953.1,837.6 950.5,826.9 948.2,835.7 946.2,824.9 944.3,812.2 941.7,816.1 938.8,817.1 935.8,819 932.9,818 929.4,824.9 926.6,817.1 923.1,827.8 920.2,821 918.2,816.1 915.3,817.1 913.3,818 910.4,817.1 907.4,820 904.5,819 900.5,821 897.6,828.8 895.3,809.2 891.7,821 888.8,822 885.5,824.9 881.9,818 879,824.9 876,821 873.1,820 870.2,821 865.3,830.8 863.3,828.8 859.4,830.8 855.5,834.7 852.9,824.9 850.5,829.8 847.6,817.1 845.6,819 843.1,814.1 839.2,826.9 835.8,819 831.9,825.9 830,821 826,822.9 822.1,822.9 820.2,819 816.2,822.9 812.3,822 809.4,809.2 806.4,810.2 803.5,811.2 800.5,830.8 798.6,828.8 795.6,840.6 792.7,830.8 788.8,818 785.8,820 781.9,822.9 778,825.9 776.6,828.8 772.7,827.8 769.8,819 766.8,818 763.9,811.2 760.9,815.1 758,819 755.1,822.9 752.1,833.7 748.8,831.8 746.2,817.1 743.7,830.8 740.9,822.9 738.4,824.9 735.5,826.9 733.1,824.9 730.5,836.7 728,863.1 724.7,836.7 722.7,817.1 720.7,815.1 716.8,816.1 712.9,817.1 710,824.9 707.6,815.1 705.1,822 702.1,826.9 699.2,817.1 696.2,816.1 693.3,812.2 690.4,817.1 686.4,815.1 682.5,816.1 679.6,822.9 677,817.1 673.7,818 670.7,825.9 666.8,811.2 664.9,814.1 662.5,808.2 659,812.2 656.6,828.8 654.1,825.9 651.1,826.9 648.2,829.8 646.2,826.9 643.3,822 640.4,822.9 637.4,830.8 635.1,823.9 631.5,830.8 628.6,823.9 625.3,843.5 622.7,834.7 619.8,814.1 617.8,816.1 615.8,811.2 612.9,824.9 609,830.8 605.1,824.9 602.1,826.9 599.2,817.1 595.8,837.6 593.3,828.8 590.4,820 587.4,826.9 585.5,823.9 583.5,827.8 580.5,819 578.6,814.1 575.6,816.1 572.7,814.1 570.7,821 567.8,836.7 564.9,817.1 561.9,822.9 558,824.9 555.1,833.7 552.1,828.8 549.2,812.2 545.3,825.9 540.4,827.8 537.4,821 535.1,826.9 532.5,818 530.5,825.9 528.6,819 525.6,834.7 522.7,842.5 518.8,829.8 515.5,837.6 511.9,828.8 508,820 505.1,814.1 502.1,808.2 499.2,810.2 495.8,816.1 492.3,811.2 488.8,803.3 486.4,806.3 483.5,804.3 480.5,805.3 477.6,799.4 474.7,796.5 470.7,792.5 465.8,792.5 462.9,811.2 460,802.4 456,799.4 451.1,803.3 447.2,804.3 443.3,810.2 440.4,815.1 437,800.4 434.5,806.3 431.5,801.4 427.6,809.2 425.3,816.1 422.7,788.6 419.8,789.6 415.8,790.6 411.9,793.5 408,788.6 407.6,790.6 402.7,792.5 399.8,805.3 397.2,815.1 393.9,804.3 390.9,803.3 388,795.5 385.1,803.3 383.1,809.2 379.6,792.5 375.3,791.6 371.3,790.6 367.4,787.6 364.5,788.6 360.5,789.6 356.6,795.5 353.7,798.4 349.8,792.5 347.8,798.4 343.9,799.4 340.9,804.3 337.6,792.5 334.1,791.6 331.1,790.6 328.2,799.4 325.3,812.2 323.3,803.3 321.3,811.2 319.4,805.3 317.4,809.2 314.5,804.3 311.5,807.3 309.6,815.1 306.6,807.3 303.7,813.1 300.7,827.8 299.2,811.2 297.8,789.6 292.9,792.5 289,789.6 284.1,793.5 281.1,792.5 277.2,790.6 275.3,803.3 272.9,817.1 269.4,803.3 266.4,797.5 263.5,801.4 260.5,805.3 258,822 256,807.3 254.7,790.6 251.7,792.5 247.8,789.6 243.9,787.6 240.9,789.6 237,791.6 234.1,797.5 230.5,805.3 226.6,796.5 224.3,797.5 221.3,803.3 218,801.4 215.5,811.2 213.1,787.6 211.5,793.5 207.6,788.6 203.7,783.7 199.8,783.3 194.9,784.7 190.5,788.6 186,785.7 181.1,781.4 176.2,782.4 172.3,780.2 167.4,781.8 163.5,779.8 157.6,780.2 151.7,778.8 147.8,779.8 141.9,777.5 136,775.9 130.2,776.5 120.4,773.9 106.6,772.9 87,772 67.4,770.6 38,770" fill="#66ff66"/></g><rect x="38" y="423" width="2" height="450" fill="#d23c3c"/><rect x="385.900" y="410" width="2.400" height="463" fill="#fff"/><rect x="562.800" y="410" width="2.300" height="463" fill="#fff"/><clipPath id="wm"><rect x="890" y="600" width="75" height="90"/><rect x="965" y="600" width="35.600" height="68"/><rect x="986.400" y="667" width="14.200" height="23"/></clipPath><text x="904.3" y="681.8" clip-path="url(#wm)" font-family="Liberation Sans, sans-serif" font-weight="700" font-size="102" letter-spacing="1.6" fill="#fff" fill-opacity="0.22">x1</text><circle cx="387.7" cy="402.7" r="18.5" fill="#000" stroke="#fff" stroke-width="2.4"/><circle cx="387.7" cy="398.3" r="6.6" fill="none" stroke="#fff" stroke-width="2.8"/><circle cx="387.7" cy="398.3" r="2.9" fill="#fff"/><path d="M385 405h5.400l-0.700 5.500l-2 5.800l-2 -5.800z" fill="#fff"/><circle cx="564.2" cy="402.7" r="18.5" fill="#000" stroke="#fff" stroke-width="2.4"/><circle cx="564.2" cy="398.3" r="6.6" fill="none" stroke="#fff" stroke-width="2.8"/><circle cx="564.2" cy="398.3" r="2.9" fill="#fff"/><path d="M561.5 405h5.400l-0.700 5.500l-2 5.800l-2 -5.800z" fill="#fff"/></svg><div class="tl" style="left:38.4px;color:#fff">0</div><div class="tl" style="left:213.6px;color:#c6c6c6">0:30</div><div class="tk" style="left:211.8px;width:3.700px;top:447.400px;height:7.2px"></div><div class="tl" style="left:388.8px;color:#fff">1:00</div><div class="tk" style="left:386.9px;width:3.700px;top:447.400px;height:9.3px"></div><div class="tl" style="left:564px;color:#c6c6c6">1:30</div><div class="tk" style="left:562.1px;width:3.700px;top:447.400px;height:7.2px"></div><div class="tl" style="left:739.2px;color:#fff">2:00</div><div class="tk" style="left:737.3px;width:3.700px;top:447.400px;height:9.3px"></div><div class="tl" style="left:914.4px;color:#c6c6c6">2:30</div><div class="tk" style="left:912.5px;width:3.700px;top:447.400px;height:7.2px"></div><div class="tl" style="left:1089.6px;color:#fff">3:00</div><div class="tk" style="left:1087.7px;width:3.700px;top:447.400px;height:9.3px"></div><div class="tl" style="left:1264.8px;color:#c6c6c6">3:30</div><div class="tk" style="left:1262.9px;width:3.700px;top:447.400px;height:7.2px"></div><div class="tl" style="left:1440px;color:#fff">4:00</div><div class="tk" style="left:1438.1px;width:3.700px;top:447.400px;height:9.3px"></div><div class="tl" style="left:1615.2px;color:#c6c6c6">4:30</div><div class="tk" style="left:1613.3px;width:3.700px;top:447.400px;height:7.2px"></div><div class="tl" style="left:1790.4px;color:#fff">5:00</div><div class="tk" style="left:1788.5px;width:3.700px;top:447.400px;height:9.3px"></div><div class="tk" style="left:35.800px;width:2.400px;top:447.400px;height:9.300px"></div><div class="ax" style="top:440.5px">0</div><div class="ax" style="top:460px">-2</div><div class="axt" style="top:467px"></div><div class="ax" style="top:479.5px">-4</div><div class="axt" style="top:486.5px"></div><div class="ax" style="top:499.5px">-7</div><div class="axt" style="top:506.5px"></div><div class="ax" style="top:519px">-12</div><div class="axt" style="top:526px"></div><div class="ax" style="top:538.5px">-26</div><div class="axt" style="top:545.5px"></div><div class="ax" style="top:658.5px">0</div><div class="axt" style="top:665.5px"></div><div class="ax" style="top:678px">-2</div><div class="axt" style="top:685px"></div><div class="ax" style="top:697.5px">-4</div><div class="axt" style="top:704.5px"></div><div class="ax" style="top:717.5px">-7</div><div class="axt" style="top:724.5px"></div><div class="ax" style="top:737px">-12</div><div class="axt" style="top:744px"></div><div class="ax" style="top:756.5px">-26</div><div class="axt" style="top:763.5px"></div>
<div class="abs" style="left:44px;top:896px;width:1840px;height:3px;background:#666"></div>
<div class="abs" style="left:38px;top:882px;width:10px;height:30px;border-radius:5px;background:#0a7bdc"></div>
<div id="bar">
<div class="tb" style="left:-13px"><svg viewBox="-0.3 -0.4 40 40"><circle cx="20" cy="20" r="18.300" fill="none" stroke="#fff" stroke-width="2.1"/><path d="M12.100 8.750H21.300L27.950 15.100V27.700H12.100Z" fill="#fff"/><path d="M20.900 8.750V15.500H27.950" fill="none" stroke="#1f1f1f" stroke-width="1.200"/><path d="M20.200 27.700V19M16.600 22.800l3.600-3.900l3.600 3.900" fill="none" stroke="#1f1f1f" stroke-width="1.700"/></svg><span style="margin-left:-1.2px">Open</span></div><div class="tb" style="left:62px"><svg viewBox="-0.3 -0.4 40 40"><circle cx="20" cy="20" r="18.300" fill="none" stroke="#fff" stroke-width="2.1"/><rect x="10.900" y="9.800" width="17.900" height="17.900" fill="#fff"/><rect x="14.700" y="12.600" width="10.600" height="3.500" fill="#1f1f1f"/><rect x="15.400" y="22.500" width="9.200" height="5.200" fill="#1f1f1f"/><rect x="16.500" y="23.900" width="3.900" height="3.800" fill="#fff"/><rect x="17.800" y="25" width="1.300" height="1.300" fill="#1f1f1f"/></svg><span style="margin-left:-1.2px">Save</span></div><div class="tb" style="left:872px"><svg viewBox="-0.2 -0.4 40 40"><circle cx="20" cy="20" r="18.300" fill="none" stroke="#fff" stroke-width="2.1"/><path d="M18 10.300h4l0.700 4h-5.400z" fill="#fff" transform="rotate(22.5 20 19.500)"/><path d="M18 10.300h4l0.700 4h-5.400z" fill="#fff" transform="rotate(67.5 20 19.500)"/><path d="M18 10.300h4l0.700 4h-5.400z" fill="#fff" transform="rotate(112.5 20 19.500)"/><path d="M18 10.300h4l0.700 4h-5.400z" fill="#fff" transform="rotate(157.5 20 19.500)"/><path d="M18 10.300h4l0.700 4h-5.400z" fill="#fff" transform="rotate(202.5 20 19.500)"/><path d="M18 10.300h4l0.700 4h-5.400z" fill="#fff" transform="rotate(247.5 20 19.500)"/><path d="M18 10.300h4l0.700 4h-5.400z" fill="#fff" transform="rotate(292.5 20 19.500)"/><path d="M18 10.300h4l0.700 4h-5.400z" fill="#fff" transform="rotate(337.5 20 19.500)"/><circle cx="20" cy="19.500" r="7.200" fill="#fff"/><circle cx="20" cy="19.500" r="4" fill="#1f1f1f"/></svg><span>Options / Help</span></div><div class="tb" style="left:947px"><svg viewBox="-0.2 -0.4 40 40"><circle cx="20" cy="20" r="18.300" fill="none" stroke="#fff" stroke-width="2.1"/><text x="20.200" y="26.200" text-anchor="middle" font-family="Liberation Sans, sans-serif" font-style="italic" font-size="18" fill="none" stroke="#fff" stroke-width="0.85">i</text></svg><span>MetaInfo</span></div><div class="tb" style="left:1022px"><svg viewBox="-0.2 -0.4 40 40"><circle cx="20" cy="20" r="18.300" fill="none" stroke="#fff" stroke-width="2.1"/><path d="M23.200 19H11M16.800 14.300l-5.200 4.700l5.200 4.700" fill="none" stroke="#fff" stroke-width="2"/><path d="M26.600 13.900v9.800" stroke="#fff" stroke-width="2.400"/></svg><span>Import / Mix</span></div><div class="tb" style="left:1097px"><svg viewBox="-0.2 -0.4 40 40"><circle cx="20" cy="20" r="18.300" fill="none" stroke="#fff" stroke-width="2.1"/><ellipse cx="13.900" cy="23.300" rx="3.900" ry="3" fill="#fff" transform="rotate(-20 13.900 23.300)"/><path d="M16.300 23.300V8h1.800c3.500 0.300 6.500 1.600 8.500 4l-0.900 0.700c-2-1.500-4.500-2.200-7.400-2.200v12.800z" fill="#fff"/><path d="M20.500 16h10.200M20.500 19.700h10.200M20.500 23.300h10.200" stroke="#fff" stroke-width="2.300"/></svg><span>Effects</span></div><div class="tb" style="left:1172px"><svg viewBox="-0.2 -0.4 40 40"><circle cx="20" cy="20" r="18.300" fill="none" stroke="#fff" stroke-width="2.1"/><path d="M15.600 7.200l6.600 15.800M24.800 7.200l-6.600 15.800" stroke="#fff" stroke-width="2" fill="none" stroke-linecap="round"/><ellipse cx="16" cy="26" rx="2.300" ry="3.700" fill="none" stroke="#fff" stroke-width="1.600" transform="rotate(22 16 26)"/><ellipse cx="24.400" cy="26" rx="2.300" ry="3.700" fill="none" stroke="#fff" stroke-width="1.600" transform="rotate(-22 24.400 26)"/></svg><span>Cut</span></div><div class="tb" style="left:1247px"><svg viewBox="-0.2 -0.4 40 40"><circle cx="20" cy="20" r="18.300" fill="none" stroke="#fff" stroke-width="2.1"/><path d="M16.600 24.500H12.300V9.300H19.300L22.600 12.600" fill="none" stroke="#fff" stroke-width="2"/><path d="M16.600 12.200h7.800l5 5v11.300h-12.800z" fill="#fff"/><path d="M18.500 14.100h4.300v4.700h4.700v7.800h-9z" fill="#1f1f1f"/></svg><span>Copy</span></div><div class="tb dis" style="left:1322px"><svg viewBox="-0.2 -0.4 40 40"><circle cx="20" cy="20" r="18.300" fill="none" stroke="#7d7d7d" stroke-width="2.1"/><path d="M14.700 10H11.700V26.200H18.400M22.700 10H26.500V16" fill="none" stroke="#7d7d7d" stroke-width="2"/><path d="M14.700 11.300V8.600H17.300V7H20.300V8.600H22.700V11.300z" fill="none" stroke="#7d7d7d" stroke-width="1.300"/><rect x="18.400" y="16" width="11.200" height="13.300" fill="#7d7d7d"/><path d="M20.300 19.200h7.400M20.300 21.800h7.400M20.300 24.400h7.400M20.300 27h4" stroke="#1f1f1f" stroke-width="1.100"/></svg><span>Paste</span></div><div class="tb" style="left:1397px"><svg viewBox="-0.2 -0.4 40 40"><circle cx="20" cy="20" r="18.300" fill="none" stroke="#fff" stroke-width="2.1"/><path d="M11.600 11.300c1.200-0.800 2.300-0.600 3.300 0.400c4 4 8.500 9.500 12.200 16.600c-4.500-6-9.500-11-15.500-17z" fill="#fff" stroke="#fff" stroke-width="1.200" stroke-linejoin="round"/><path d="M29 10.500c-5 3-10.500 9-13.200 15.500l-2.600-1.300c3.300-5.700 9.300-11.200 15.800-14.200z" fill="#fff" stroke="#fff" stroke-width="0.600" stroke-linejoin="round"/></svg><span>Delete</span></div><div class="tb" style="left:1472px"><svg viewBox="-0.2 -0.4 40 40"><circle cx="20" cy="20" r="18.300" fill="none" stroke="#fff" stroke-width="2.1"/><path d="M13.400 10.600v16M26 10.600v16" stroke="#fff" stroke-width="1.300" stroke-dasharray="1.400 1.300"/><rect x="12.800" y="16.500" width="13.800" height="4.200" fill="#fff"/><path d="M6.400 18.600h6M27 18.600h5.600" stroke="#fff" stroke-width="4" stroke-dasharray="1.300 0.700"/></svg><span>Trim (Reverse<br>Delete)</span></div><div class="tb" style="left:1547px"><svg viewBox="-0.2 -0.4 40 40"><circle cx="20" cy="20" r="18.300" fill="none" stroke="#fff" stroke-width="2.1"/><path d="M11 14.300h3.300v8.600H11z" fill="#fff"/><path d="M15 14.300l7.100-4.800v18.200l-7.100-4.800z" fill="#fff"/><path d="M23.700 14.900l7 7.400M30.700 14.900l-7 7.400" stroke="#fff" stroke-width="1.700"/></svg><span>Silence</span></div><div class="tb" style="left:1622px"><svg viewBox="-0.2 -0.4 40 40"><circle cx="20" cy="20" r="18.300" fill="none" stroke="#fff" stroke-width="2.1"/><circle cx="16.300" cy="15.400" r="6.400" fill="none" stroke="#fff" stroke-width="2.200"/><path d="M21.600 20.200l8 5.900" stroke="#fff" stroke-width="3.200" stroke-linecap="round"/><path d="M12.600 15.400h7.400" stroke="#fff" stroke-width="2"/><path d="M16.300 11.700v7.400" stroke="#fff" stroke-width="2"/></svg><span>Zoom in</span></div><div class="tb dis" style="left:1697px"><svg viewBox="-0.2 -0.4 40 40"><circle cx="20" cy="20" r="18.300" fill="none" stroke="#7d7d7d" stroke-width="2.1"/><circle cx="16.300" cy="15.400" r="6.400" fill="none" stroke="#7d7d7d" stroke-width="2.200"/><path d="M21.600 20.200l8 5.900" stroke="#7d7d7d" stroke-width="3.200" stroke-linecap="round"/><path d="M12.600 15.400h7.400" stroke="#7d7d7d" stroke-width="2"/></svg><span>Zoom out</span></div><div class="tb dis" style="left:1772px"><svg viewBox="-0.2 -0.4 40 40"><circle cx="20" cy="20" r="18.300" fill="none" stroke="#7d7d7d" stroke-width="2.1"/><path d="M14.700 15.500C17 12 20 10.300 23.500 11.200c4 1.200 5.500 5 3.800 8.500c-1.500 2.800-4.500 5-7.500 6.800" fill="none" stroke="#7d7d7d" stroke-width="3"/><path d="M9.900 10.600l1.600 9.300l7.600-1.300z" fill="#7d7d7d"/></svg><span>Undo</span></div><div class="abs" style="left:1881px;top:14.700px;width:2.600px;height:2.600px;border-radius:2px;background:#fff;box-shadow:7.500px 0 #fff,15px 0 #fff"></div>
</div>
</body></html>
